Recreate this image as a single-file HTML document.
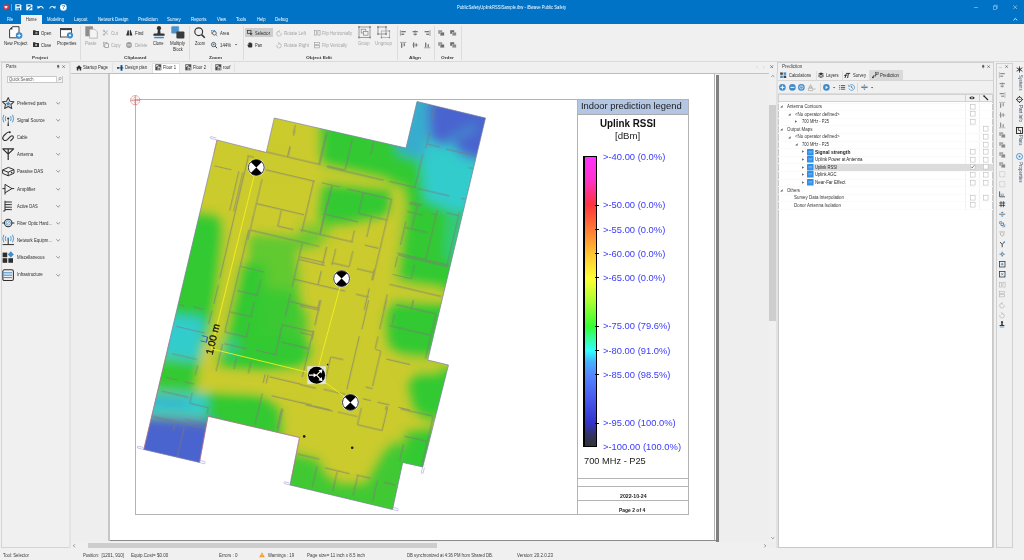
<!DOCTYPE html>
<html lang="en"><head><meta charset="utf-8"><title>PublicSafetyUplinkRSSISample.ibw - iBwave Public Safety</title>
<style>
html,body{margin:0;padding:0;}
body{width:1024px;height:560px;overflow:hidden;background:#f0f0f0;position:relative;font-family:"Liberation Sans",sans-serif;}
#app{position:absolute;left:0;top:0;width:1024px;height:560px;overflow:hidden;will-change:transform;}
.r{position:absolute;display:block;box-sizing:border-box;}
.t{position:absolute;white-space:nowrap;transform-origin:left center;display:block;}
svg{overflow:visible;}
svg text{font-family:"Liberation Sans",sans-serif;}
</style></head><body>
<div id="app">
<div class="r " style="left:0.00px;top:0.00px;width:1024.00px;height:23.70px;background:#0173c7;"></div>
<svg class="r" style="left:2.60px;top:4.00px;" width="6" height="6.4" viewBox="0 0 6 6.4"><path d="M0.6 0.4 H5.4 Q6 0.4 6 1 V4 Q6 5.4 3 6.4 Q0 5.4 0 4 V1 Q0 0.4 0.6 0.4Z" fill="#d9303e"/><path d="M1.6 2 H4.4 V3.6 L3 4.8 L1.6 3.6Z" fill="#fff" opacity="0.9"/></svg>
<div class="r " style="left:11.40px;top:4.00px;width:0.50px;height:6.50px;background:rgba(255,255,255,0.35);"></div>
<svg class="r" style="left:15.20px;top:3.90px;" width="6.6" height="6.6" viewBox="0 0 6.6 6.6"><path d="M0.3 0.3 H5.3 L6.3 1.3 V6.3 H0.3Z" fill="#fff"/><rect x="1.5" y="0.9" width="3.2" height="1.7" fill="#0173c7"/><rect x="1.6" y="3.9" width="3.4" height="2.4" fill="#0173c7"/><rect x="2.4" y="4.3" width="1" height="1.6" fill="#fff"/></svg>
<svg class="r" style="left:26.20px;top:3.90px;" width="6.6" height="6.6" viewBox="0 0 6.6 6.6"><path d="M0.3 0.3 H5.3 L6.3 1.3 V6.3 H0.3Z" fill="#fff"/><rect x="1.5" y="0.9" width="3.2" height="1.7" fill="#0173c7"/><path d="M2 5.6 L5 2.8 L5.8 3.6 L2.8 6.3 H2Z" fill="#0173c7"/></svg>
<svg class="r" style="left:37.30px;top:4.50px;" width="7" height="5" viewBox="0 0 7 5"><path d="M1.6 2.3 Q4.6 0.2 6.4 3.4" fill="none" stroke="#fff" stroke-width="1.1"/><path d="M0.2 0.8 L0.6 3.8 L3.2 2.8Z" fill="#fff"/></svg>
<svg class="r" style="left:48.60px;top:4.50px;" width="7" height="5" viewBox="0 0 7 5"><path d="M5.4 2.3 Q2.4 0.2 0.6 3.4" fill="none" stroke="#fff" stroke-width="1.1" opacity="0.85"/><path d="M6.8 0.8 L6.4 3.8 L3.8 2.8Z" fill="#fff" opacity="0.85"/></svg>
<svg class="r" style="left:59.70px;top:3.80px;" width="6.8" height="6.8" viewBox="0 0 6.8 6.8"><circle cx="3.4" cy="3.4" r="3.3" fill="#fff"/><text x="3.4" y="5.4" font-size="5.6" font-weight="bold" text-anchor="middle" fill="#0173c7">?</text></svg>
<span class="t " style="left:456.90px;top:4.82px;font-size:4.5px;line-height:5.40px;color:#ffffff;transform:scaleX(0.931);">PublicSafetyUplinkRSSISample.ibw - iBwave Public Safety</span>
<div class="r " style="left:974.20px;top:7.40px;width:4.20px;height:0.50px;background:rgba(255,255,255,0.4);"></div>
<svg class="r" style="left:993.20px;top:5.20px;" width="4.6" height="4.6" viewBox="0 0 4.6 4.6"><rect x="0.3" y="1.1" width="3.2" height="3.2" fill="none" stroke="rgba(255,255,255,0.7)" stroke-width="0.5"/><path d="M1.2 1.1 V0.3 H4.3 V3.4 H3.5" fill="none" stroke="rgba(255,255,255,0.7)" stroke-width="0.5"/></svg>
<svg class="r" style="left:1012.60px;top:5.10px;" width="4.4" height="4.4" viewBox="0 0 4.4 4.4"><path d="M0.3 0.3 L4.1 4.1 M4.1 0.3 L0.3 4.1" stroke="rgba(255,255,255,0.8)" stroke-width="0.55" fill="none"/></svg>
<svg class="r" style="left:1012.70px;top:18.20px;" width="4.6" height="2.6" viewBox="0 0 4.6 2.6"><path d="M0.4 2.3 L2.3 0.5 L4.2 2.3" stroke="#fff" stroke-width="0.8" fill="none"/></svg>
<div class="r " style="left:21.00px;top:15.00px;width:21.20px;height:9.00px;background:#f0f0f0;"></div>
<span class="t " style="left:7.00px;top:16.82px;font-size:4.5px;line-height:5.40px;color:#fff;transform:scaleX(0.855);">File</span>
<span class="t " style="left:26.00px;top:16.82px;font-size:4.5px;line-height:5.40px;color:#2b2b2b;transform:scaleX(0.883);">Home</span>
<span class="t " style="left:47.00px;top:16.82px;font-size:4.5px;line-height:5.40px;color:#fff;transform:scaleX(0.931);">Modeling</span>
<span class="t " style="left:74.00px;top:16.82px;font-size:4.5px;line-height:5.40px;color:#fff;">Layout</span>
<span class="t " style="left:97.50px;top:16.82px;font-size:4.5px;line-height:5.40px;color:#fff;transform:scaleX(0.960);">Network Design</span>
<span class="t " style="left:138.20px;top:16.82px;font-size:4.5px;line-height:5.40px;color:#fff;transform:scaleX(0.989);">Prediction</span>
<span class="t " style="left:167.20px;top:16.82px;font-size:4.5px;line-height:5.40px;color:#fff;transform:scaleX(0.985);">Survey</span>
<span class="t " style="left:191.20px;top:16.82px;font-size:4.5px;line-height:5.40px;color:#fff;transform:scaleX(0.977);">Reports</span>
<span class="t " style="left:217.00px;top:16.82px;font-size:4.5px;line-height:5.40px;color:#fff;transform:scaleX(0.951);">View</span>
<span class="t " style="left:236.40px;top:16.82px;font-size:4.5px;line-height:5.40px;color:#fff;transform:scaleX(0.971);">Tools</span>
<span class="t " style="left:256.60px;top:16.82px;font-size:4.5px;line-height:5.40px;color:#fff;transform:scaleX(0.908);">Help</span>
<span class="t " style="left:275.00px;top:16.82px;font-size:4.5px;line-height:5.40px;color:#fff;transform:scaleX(0.980);">Debug</span>
<div class="r " style="left:0.00px;top:23.70px;width:1024.00px;height:37.60px;background:#f0f0f0;"></div>
<div class="r " style="left:0.00px;top:61.10px;width:1024.00px;height:0.60px;background:#dadada;"></div>
<div class="r " style="left:80.30px;top:26.00px;width:0.50px;height:33.50px;background:#dcdcdc;"></div>
<div class="r " style="left:189.00px;top:26.00px;width:0.50px;height:33.50px;background:#dcdcdc;"></div>
<div class="r " style="left:242.50px;top:26.00px;width:0.50px;height:33.50px;background:#dcdcdc;"></div>
<div class="r " style="left:396.50px;top:26.00px;width:0.50px;height:33.50px;background:#dcdcdc;"></div>
<div class="r " style="left:434.40px;top:26.00px;width:0.50px;height:33.50px;background:#dcdcdc;"></div>
<div class="r " style="left:461.30px;top:26.00px;width:0.50px;height:33.50px;background:#dcdcdc;"></div>
<span class="t " style="left:32.00px;top:54.92px;font-size:4.4px;line-height:5.28px;color:#3a3a3a;font-weight:bold;transform:scaleX(1.073);">Project</span>
<span class="t " style="left:123.50px;top:54.92px;font-size:4.4px;line-height:5.28px;color:#3a3a3a;font-weight:bold;transform:scaleX(1.096);">Clipboard</span>
<span class="t " style="left:209.00px;top:54.92px;font-size:4.4px;line-height:5.28px;color:#3a3a3a;font-weight:bold;transform:scaleX(1.086);">Zoom</span>
<span class="t " style="left:306.00px;top:54.92px;font-size:4.4px;line-height:5.28px;color:#3a3a3a;font-weight:bold;transform:scaleX(1.119);">Object Edit</span>
<span class="t " style="left:409.00px;top:54.92px;font-size:4.4px;line-height:5.28px;color:#3a3a3a;font-weight:bold;transform:scaleX(1.091);">Align</span>
<span class="t " style="left:441.00px;top:54.92px;font-size:4.4px;line-height:5.28px;color:#3a3a3a;font-weight:bold;transform:scaleX(1.085);">Order</span>
<svg class="r" style="left:9.00px;top:25.60px;" width="14" height="13" viewBox="0 0 14 13"><path d="M3.4 0.7 H10 V11.8 H0.6 V3.5Z" fill="#fdfdfd" stroke="#3c3c3c" stroke-width="1" stroke-linejoin="round"/><path d="M0.6 3.5 H3.4 V0.7Z" fill="#3c3c3c"/><circle cx="10.1" cy="9.6" r="3.3" fill="#3f8ccb"/><path d="M10.1 7.4 L10.7 9 L12.3 9.6 L10.7 10.2 L10.1 11.8 L9.5 10.2 L7.9 9.6 L9.5 9Z" fill="#fff"/></svg>
<span class="t " style="left:4.00px;top:40.82px;font-size:4.5px;line-height:5.40px;color:#2b2b2b;transform:scaleX(0.969);">New Project</span>
<svg class="r" style="left:32.60px;top:30.40px;" width="6" height="5" viewBox="0 0 6 5"><path d="M0 0.3 H2.2 L2.8 1 H6 V5 H0Z" fill="#333"/><path d="M2 3 H4.2 M3.4 2.2 L4.3 3 L3.4 3.8" stroke="#fff" stroke-width="0.6" fill="none"/></svg>
<span class="t " style="left:41.00px;top:30.82px;font-size:4.5px;line-height:5.40px;color:#2b2b2b;transform:scaleX(0.954);">Open</span>
<svg class="r" style="left:32.60px;top:42.00px;" width="6" height="5" viewBox="0 0 6 5"><path d="M0 0.3 H2.2 L2.8 1 H6 V5 H0Z" fill="#333"/><path d="M2.2 2 L4 4 M4 2 L2.2 4" stroke="#fff" stroke-width="0.6" fill="none"/></svg>
<span class="t " style="left:41.00px;top:42.82px;font-size:4.5px;line-height:5.40px;color:#2b2b2b;transform:scaleX(0.887);">Close</span>
<svg class="r" style="left:59.50px;top:27.50px;" width="14" height="11" viewBox="0 0 14 11"><rect x="0.5" y="0.5" width="11" height="8.5" fill="#fdfdfd" stroke="#3c3c3c" stroke-width="0.9"/><rect x="0.5" y="0.5" width="11" height="1.6" fill="#3c3c3c"/><circle cx="10" cy="7.3" r="3.1" fill="#3f8ccb"/><circle cx="10" cy="7.3" r="1.1" fill="#fff"/></svg>
<span class="t " style="left:56.50px;top:40.82px;font-size:4.5px;line-height:5.40px;color:#2b2b2b;transform:scaleX(0.951);">Properties</span>
<svg class="r" style="left:85.00px;top:26.00px;" width="13" height="12.5" viewBox="0 0 13 12.5"><rect x="0.3" y="0.3" width="7.6" height="10" fill="#8d8d8d"/><path d="M4.6 3.2 H9.6 L12.3 5.9 V12.2 H4.6Z" fill="#f4f4f4" stroke="#a5a5a5" stroke-width="0.7"/></svg>
<span class="t " style="left:85.00px;top:40.82px;font-size:4.5px;line-height:5.40px;color:#a3a3a3;">Paste</span>
<svg class="r" style="left:103.00px;top:29.80px;" width="6" height="5.6" viewBox="0 0 6 5.6"><path d="M0.6 0.4 L5 4.6 M5 0.4 L0.6 4.6" stroke="#9a9a9a" stroke-width="0.7" fill="none"/><circle cx="1" cy="4.6" r="0.8" fill="none" stroke="#9a9a9a" stroke-width="0.5"/><circle cx="1" cy="0.9" r="0.8" fill="none" stroke="#9a9a9a" stroke-width="0.5"/></svg>
<span class="t " style="left:111.00px;top:30.82px;font-size:4.5px;line-height:5.40px;color:#a3a3a3;">Cut</span>
<svg class="r" style="left:103.00px;top:41.60px;" width="6" height="6" viewBox="0 0 6 6"><rect x="0.4" y="0.4" width="3.6" height="3.8" fill="none" stroke="#a0a0a0" stroke-width="0.6"/><rect x="1.8" y="1.8" width="3.8" height="3.8" fill="#f6f6f6" stroke="#8a8a8a" stroke-width="0.7"/></svg>
<span class="t " style="left:111.00px;top:42.82px;font-size:4.5px;line-height:5.40px;color:#a3a3a3;transform:scaleX(0.904);">Copy</span>
<svg class="r" style="left:126.20px;top:29.80px;" width="6.6" height="5.6" viewBox="0 0 6.6 5.6"><path d="M0.2 5.4 L1.6 1 H2.8 L3 5.4Z M6.4 5.4 L5 1 H3.8 L3.6 5.4Z" fill="#2e2e2e"/><rect x="1.6" y="0.2" width="1.1" height="1.2" fill="#2e2e2e"/><rect x="3.9" y="0.2" width="1.1" height="1.2" fill="#2e2e2e"/></svg>
<span class="t " style="left:134.50px;top:30.82px;font-size:4.5px;line-height:5.40px;color:#2b2b2b;transform:scaleX(0.971);">Find</span>
<svg class="r" style="left:126.40px;top:41.70px;" width="6" height="6" viewBox="0 0 6 6"><circle cx="3" cy="3" r="2.9" fill="#9d9d9d"/><rect x="1.2" y="2.5" width="3.6" height="1" fill="#e8e8e8"/></svg>
<span class="t " style="left:134.50px;top:42.82px;font-size:4.5px;line-height:5.40px;color:#a3a3a3;transform:scaleX(0.961);">Delete</span>
<svg class="r" style="left:153.00px;top:26.00px;" width="12" height="12.5" viewBox="0 0 12 12.5"><circle cx="6" cy="2.2" r="2.1" fill="#333"/><path d="M4.9 3.5 H7.1 L7.6 7.6 H10.6 Q11.6 7.6 11.6 8.6 V9.8 H0.4 V8.6 Q0.4 7.6 1.4 7.6 H4.4Z" fill="#333"/><rect x="1.2" y="10.8" width="9.6" height="1.5" fill="#3f8ccb"/></svg>
<span class="t " style="left:153.00px;top:40.82px;font-size:4.5px;line-height:5.40px;color:#2b2b2b;transform:scaleX(0.893);">Clone</span>
<svg class="r" style="left:171.00px;top:26.00px;" width="14" height="13" viewBox="0 0 14 13"><rect x="0.3" y="0.3" width="7.6" height="7.2" rx="1" fill="#4a92cc"/><path d="M0.3 1.5 L1.5 0.3 H7.9 V6.3" fill="none" stroke="#7fb4de" stroke-width="0.5"/><rect x="5.4" y="5.4" width="8" height="7.2" rx="1" fill="#3a3a3a"/></svg>
<span class="t " style="left:170.00px;top:40.82px;font-size:4.5px;line-height:5.40px;color:#2b2b2b;transform:scaleX(0.983);">Multiply</span>
<span class="t " style="left:172.50px;top:46.82px;font-size:4.5px;line-height:5.40px;color:#2b2b2b;transform:scaleX(0.872);">Block</span>
<svg class="r" style="left:194.00px;top:27.00px;" width="11.5" height="11.5" viewBox="0 0 11.5 11.5"><circle cx="4.7" cy="4.7" r="3.9" fill="none" stroke="#333" stroke-width="1.15"/><path d="M7.6 7.6 L10.8 10.8" stroke="#333" stroke-width="1.5"/></svg>
<span class="t " style="left:194.50px;top:40.82px;font-size:4.5px;line-height:5.40px;color:#2b2b2b;transform:scaleX(0.869);">Zoom</span>
<svg class="r" style="left:211.20px;top:29.60px;" width="6.6" height="6.2" viewBox="0 0 6.6 6.2"><rect x="0.4" y="0.4" width="3.4" height="3" fill="none" stroke="#3f8ccb" stroke-width="0.6"/><circle cx="3.4" cy="3.2" r="1.9" fill="#f0f0f0" stroke="#333" stroke-width="0.7"/><path d="M4.8 4.6 L6.3 6" stroke="#3f8ccb" stroke-width="0.9"/></svg>
<span class="t " style="left:219.50px;top:30.82px;font-size:4.5px;line-height:5.40px;color:#2b2b2b;transform:scaleX(0.947);">Area</span>
<svg class="r" style="left:211.20px;top:41.60px;" width="6.6" height="6.4" viewBox="0 0 6.6 6.4"><circle cx="2.6" cy="2.6" r="2.2" fill="none" stroke="#333" stroke-width="0.7"/><circle cx="2.6" cy="2.6" r="1" fill="#3f8ccb"/><path d="M4.2 4.2 L6.2 6.2" stroke="#333" stroke-width="0.9"/></svg>
<span class="t " style="left:220.00px;top:42.82px;font-size:4.5px;line-height:5.40px;color:#2b2b2b;transform:scaleX(0.956);">144%</span>
<svg class="r" style="left:235.00px;top:44.20px;" width="2.2" height="1.4" viewBox="0 0 2.2 1.4"><path d="M0 0 H2.2 L1.1 1.3Z" fill="#444"/></svg>
<div class="r " style="left:244.50px;top:28.40px;width:28.60px;height:8.60px;background:#cdcdcd;"></div>
<svg class="r" style="left:246.60px;top:30.00px;" width="6.4" height="5.6" viewBox="0 0 6.4 5.6"><rect x="0.4" y="0.4" width="3.6" height="3" fill="none" stroke="#333" stroke-width="0.7"/><path d="M2.8 2.2 L6 3.8 L4.6 4.2 L5.6 5.4 L4.9 5.6 L4 4.5 L3.1 5.4Z" fill="#333" stroke="#cdcdcd" stroke-width="0.2"/></svg>
<span class="t " style="left:255.00px;top:30.82px;font-size:4.5px;line-height:5.40px;color:#2b2b2b;transform:scaleX(0.909);">Selector</span>
<svg class="r" style="left:246.80px;top:42.00px;" width="6.4" height="5.8" viewBox="0 0 6.4 5.8"><path d="M1.6 5.6 Q0.2 3.6 0.4 2.6 L1.4 3 V0.9 Q1.9 0.4 2.3 0.9 V0.5 Q2.9 0 3.3 0.5 V0.7 Q3.9 0.3 4.3 0.8 V1.3 Q4.9 1 5.3 1.5 V4 Q5.3 5 4.6 5.6Z" fill="#333"/></svg>
<span class="t " style="left:255.00px;top:42.82px;font-size:4.5px;line-height:5.40px;color:#2b2b2b;transform:scaleX(0.899);">Pan</span>
<svg class="r" style="left:276.00px;top:30.00px;" width="6" height="6" viewBox="0 0 6 6"><g transform="translate(6,0) scale(-1,1)"><path d="M3 1.4 A2.3 2.3 0 1 1 0.9 2.9" fill="none" stroke="#a2a2a2" stroke-width="0.6"/><path d="M2 0.2 L3.4 1.4 L2 2.6" fill="none" stroke="#a2a2a2" stroke-width="0.6"/></g></svg>
<span class="t " style="left:284.00px;top:30.82px;font-size:4.5px;line-height:5.40px;color:#a3a3a3;">Rotate Left</span>
<svg class="r" style="left:276.00px;top:41.80px;" width="6" height="6" viewBox="0 0 6 6"><g><path d="M3 1.4 A2.3 2.3 0 1 1 0.9 2.9" fill="none" stroke="#a2a2a2" stroke-width="0.6"/><path d="M2 0.2 L3.4 1.4 L2 2.6" fill="none" stroke="#a2a2a2" stroke-width="0.6"/></g></svg>
<span class="t " style="left:284.00px;top:42.82px;font-size:4.5px;line-height:5.40px;color:#a3a3a3;">Rotate Right</span>
<svg class="r" style="left:314.00px;top:30.20px;" width="6.4" height="5.4" viewBox="0 0 6.4 5.4"><rect x="0.3" y="0.3" width="2.2" height="4.8" fill="none" stroke="#9a9a9a" stroke-width="0.6"/><rect x="3.9" y="0.3" width="2.2" height="4.8" fill="none" stroke="#9a9a9a" stroke-width="0.6"/></svg>
<span class="t " style="left:322.00px;top:30.82px;font-size:4.5px;line-height:5.40px;color:#a3a3a3;transform:scaleX(0.937);">Flip Horizontally</span>
<svg class="r" style="left:314.20px;top:41.60px;" width="6" height="6.2" viewBox="0 0 6 6.2"><rect x="0.3" y="0.3" width="5.2" height="2.2" fill="none" stroke="#9a9a9a" stroke-width="0.6"/><rect x="0.3" y="3.7" width="5.2" height="2.2" fill="none" stroke="#9a9a9a" stroke-width="0.6"/></svg>
<span class="t " style="left:322.00px;top:42.82px;font-size:4.5px;line-height:5.40px;color:#a3a3a3;transform:scaleX(0.943);">Flip Vertically</span>
<svg class="r" style="left:357.50px;top:26.00px;" width="13" height="12.6" viewBox="0 0 13 12.6"><rect x="1" y="1" width="11" height="10.6" fill="none" stroke="#858585" stroke-width="0.8"/><rect x="3.2" y="3.2" width="4.6" height="3.8" fill="none" stroke="#858585" stroke-width="0.7"/><rect x="5.4" y="5.4" width="4.6" height="3.8" fill="#f0f0f0" stroke="#858585" stroke-width="0.7"/><g fill="#8a8a8a"><circle cx="1" cy="1" r="1"/><circle cx="12" cy="1" r="1"/><circle cx="1" cy="11.6" r="1"/><circle cx="12" cy="11.6" r="1"/></g></svg>
<span class="t " style="left:358.00px;top:40.82px;font-size:4.5px;line-height:5.40px;color:#a3a3a3;transform:scaleX(0.919);">Group</span>
<svg class="r" style="left:377.00px;top:26.00px;" width="13.4" height="12.6" viewBox="0 0 13.4 12.6"><rect x="1" y="1" width="8" height="7" fill="none" stroke="#858585" stroke-width="0.8"/><rect x="4.4" y="5" width="8" height="6.6" fill="none" stroke="#a0a0a0" stroke-width="0.7"/><g fill="#8a8a8a"><circle cx="1" cy="1" r="1"/><circle cx="9" cy="1" r="1"/><circle cx="1" cy="8" r="1"/><circle cx="9" cy="8" r="1"/><circle cx="12.4" cy="5" r="0.8"/><circle cx="12.4" cy="11.6" r="0.8"/><circle cx="4.4" cy="11.6" r="0.8"/></g></svg>
<span class="t " style="left:375.00px;top:40.82px;font-size:4.5px;line-height:5.40px;color:#a3a3a3;transform:scaleX(0.985);">Ungroup</span>
<svg class="r" style="left:400.30px;top:29.60px;" width="6.4" height="6" viewBox="0 0 6.4 6"><path d="M0.4 0 V6" stroke="#777" stroke-width="0.6"/><rect x="1.2" y="1" width="4.6" height="1.3" fill="#777"/><rect x="1.2" y="3.6" width="3" height="1.3" fill="#777"/></svg>
<svg class="r" style="left:400.30px;top:41.60px;" width="6.4" height="6" viewBox="0 0 6.4 6"><path d="M0 0.4 H6.4" stroke="#777" stroke-width="0.6"/><rect x="1" y="1.2" width="1.3" height="4.6" fill="#777"/><rect x="3.6" y="1.2" width="1.3" height="3" fill="#777"/></svg>
<svg class="r" style="left:412.00px;top:29.60px;" width="6.4" height="6" viewBox="0 0 6.4 6"><path d="M3.2 0 V6" stroke="#777" stroke-width="0.5"/><rect x="0.6" y="1" width="5.2" height="1.3" fill="#777"/><rect x="1.6" y="3.6" width="3.2" height="1.3" fill="#777"/></svg>
<svg class="r" style="left:412.00px;top:41.60px;" width="6.4" height="6" viewBox="0 0 6.4 6"><path d="M0 3 H6.4" stroke="#777" stroke-width="0.5"/><rect x="1" y="0.4" width="1.3" height="5.2" fill="#777"/><rect x="3.6" y="1.4" width="1.3" height="3.2" fill="#777"/></svg>
<svg class="r" style="left:423.70px;top:29.60px;" width="6.4" height="6" viewBox="0 0 6.4 6"><path d="M6 0 V6" stroke="#777" stroke-width="0.6"/><rect x="0.6" y="1" width="4.6" height="1.3" fill="#777"/><rect x="2.2" y="3.6" width="3" height="1.3" fill="#777"/></svg>
<svg class="r" style="left:423.70px;top:41.60px;" width="6.4" height="6" viewBox="0 0 6.4 6"><path d="M0 5.8 H6.4" stroke="#777" stroke-width="0.6"/><rect x="1" y="0.6" width="1.3" height="4.6" fill="#777"/><rect x="3.6" y="2.2" width="1.3" height="3" fill="#777"/></svg>
<svg class="r" style="left:438.40px;top:29.80px;" width="6.4" height="6" viewBox="0 0 6.4 6"><rect x="0.2" y="0.2" width="4" height="3.6" fill="#9a9a9a"/><rect x="2.2" y="2.2" width="4" height="3.6" fill="#6e6e6e" stroke="#f0f0f0" stroke-width="0.3"/></svg>
<svg class="r" style="left:450.00px;top:29.80px;" width="6.4" height="6" viewBox="0 0 6.4 6"><rect x="0.2" y="0.2" width="4" height="3.6" fill="#6e6e6e"/><rect x="2.2" y="2.2" width="4" height="3.6" fill="#8a8a8a" stroke="#f0f0f0" stroke-width="0.3"/></svg>
<svg class="r" style="left:438.40px;top:41.70px;" width="6.4" height="6" viewBox="0 0 6.4 6"><rect x="0.2" y="0.2" width="4" height="3.6" fill="#9a9a9a"/><rect x="2.2" y="2.2" width="4" height="3.6" fill="#6e6e6e" stroke="#f0f0f0" stroke-width="0.3"/></svg>
<svg class="r" style="left:450.00px;top:41.70px;" width="6.4" height="6" viewBox="0 0 6.4 6"><rect x="0.2" y="0.2" width="4" height="3.6" fill="#6e6e6e"/><rect x="2.2" y="2.2" width="4" height="3.6" fill="#8a8a8a" stroke="#f0f0f0" stroke-width="0.3"/></svg>
<div class="r " style="left:1.30px;top:62.20px;width:68.40px;height:486.00px;background:#f0f0f0;border:0.6px solid #d4d4d4;"></div>
<span class="t " style="left:6.00px;top:63.73px;font-size:4.6px;line-height:5.52px;color:#444;transform:scaleX(0.978);">Parts</span>
<svg class="r" style="left:57.40px;top:64.60px;" width="2.4" height="3.4" viewBox="0 0 2.4 3.4"><path d="M0.5 0.3 H1.9 V2 H0.5Z M0 2 H2.4 M1.2 2 V3.4" stroke="#555" stroke-width="0.5" fill="#555"/></svg>
<svg class="r" style="left:62.40px;top:64.80px;" width="3.2" height="3.2" viewBox="0 0 3.2 3.2"><path d="M0.3 0.3 L2.9 2.9 M2.9 0.3 L0.3 2.9" stroke="#444" stroke-width="0.55"/></svg>
<div class="r " style="left:7.40px;top:75.60px;width:55.40px;height:7.20px;background:#ffffff;border:0.6px solid #c8c8c8;"></div>
<div class="r " style="left:56.40px;top:75.90px;width:6.10px;height:6.60px;background:#f2f2f2;border-left:0.5px solid #d0d0d0;"></div>
<span class="t " style="left:9.00px;top:76.82px;font-size:4.5px;line-height:5.40px;color:#555;transform:scaleX(0.911);">Quick Search</span>
<svg class="r" style="left:58.00px;top:77.40px;" width="3.6" height="3.8" viewBox="0 0 3.6 3.8"><circle cx="2.2" cy="1.4" r="1.1" fill="none" stroke="#777" stroke-width="0.5"/><path d="M1.4 2.2 L0.3 3.5" stroke="#777" stroke-width="0.6"/></svg>
<svg class="r" style="left:2.40px;top:96.80px;" width="12.6" height="12.4" viewBox="0 0 12.6 12.4"><g stroke-linejoin="round"><path d="M6.2 0.6 L7.9 4.3 L11.9 4.8 L8.9 7.5 L9.8 11.5 L6.2 9.5 L2.6 11.5 L3.5 7.5 L0.5 4.8 L4.5 4.3Z" fill="none" stroke="#3a3a3a" stroke-width="1.05"/><path d="M6.2 4 L7 5.8 L8.9 6 L7.5 7.2 L7.9 9 L6.2 8.1 L4.5 9 L4.9 7.2 L3.5 6 L5.4 5.8Z" fill="#3f8ccb"/></g></svg>
<span class="t " style="left:16.80px;top:100.82px;font-size:4.5px;line-height:5.40px;color:#2b2b2b;transform:scaleX(0.983);">Preferred parts</span>
<svg class="r" style="left:56.00px;top:101.80px;" width="4.4" height="2.6" viewBox="0 0 4.4 2.6"><path d="M0.3 0.3 L2.2 2.1 L4.1 0.3" fill="none" stroke="#555" stroke-width="0.6"/></svg>
<svg class="r" style="left:2.40px;top:113.97px;" width="12.6" height="12.4" viewBox="0 0 12.6 12.4"><g stroke-linejoin="round"><path d="M6.2 5 L5.4 12 H7Z" fill="#2e2e2e"/><circle cx="6.2" cy="4.6" r="1.1" fill="#2e2e2e"/><path d="M3.8 2.2 Q2.6 4.6 3.8 7 M8.6 2.2 Q9.8 4.6 8.6 7" fill="none" stroke="#3f8ccb" stroke-width="0.9"/><path d="M1.8 0.8 Q-0.2 4.6 1.8 8.4 M10.6 0.8 Q12.6 4.6 10.6 8.4" fill="none" stroke="#3f8ccb" stroke-width="0.9"/></g></svg>
<span class="t " style="left:16.80px;top:117.82px;font-size:4.5px;line-height:5.40px;color:#2b2b2b;transform:scaleX(0.985);">Signal Source</span>
<svg class="r" style="left:56.00px;top:118.97px;" width="4.4" height="2.6" viewBox="0 0 4.4 2.6"><path d="M0.3 0.3 L2.2 2.1 L4.1 0.3" fill="none" stroke="#555" stroke-width="0.6"/></svg>
<svg class="r" style="left:2.40px;top:131.14px;" width="12.6" height="12.4" viewBox="0 0 12.6 12.4"><g stroke-linejoin="round"><path d="M7.4 1 Q5.8 0.8 4 2.6 L1.6 5 Q-0.2 7 1.6 8.8 Q3.4 10.4 5.4 8.6 L8.6 5.4 Q10 4.2 11 5.2 Q12 6.4 10.8 7.6 L8.4 10" fill="none" stroke="#2e2e2e" stroke-width="1.1"/><circle cx="7.8" cy="1.2" r="1" fill="#2e2e2e"/></g></svg>
<span class="t " style="left:16.80px;top:134.82px;font-size:4.5px;line-height:5.40px;color:#2b2b2b;transform:scaleX(0.902);">Cable</span>
<svg class="r" style="left:56.00px;top:136.14px;" width="4.4" height="2.6" viewBox="0 0 4.4 2.6"><path d="M0.3 0.3 L2.2 2.1 L4.1 0.3" fill="none" stroke="#555" stroke-width="0.6"/></svg>
<svg class="r" style="left:2.40px;top:148.31px;" width="12.6" height="12.4" viewBox="0 0 12.6 12.4"><g stroke-linejoin="round"><path d="M0.8 0.8 H11.6 L6.2 6.2Z M6.2 0.8 V12" fill="none" stroke="#2e2e2e" stroke-width="1.2"/></g></svg>
<span class="t " style="left:16.80px;top:151.82px;font-size:4.5px;line-height:5.40px;color:#2b2b2b;transform:scaleX(0.966);">Antenna</span>
<svg class="r" style="left:56.00px;top:153.31px;" width="4.4" height="2.6" viewBox="0 0 4.4 2.6"><path d="M0.3 0.3 L2.2 2.1 L4.1 0.3" fill="none" stroke="#555" stroke-width="0.6"/></svg>
<svg class="r" style="left:2.40px;top:165.48px;" width="12.6" height="12.4" viewBox="0 0 12.6 12.4"><g stroke-linejoin="round"><path d="M0.6 5 L6.4 2.4 L12 4.6 V8.2 L6.2 10.8 L0.6 8.4Z M0.6 5 L6.2 7.2 L12 4.6 M6.2 7.2 V10.8" fill="none" stroke="#2e2e2e" stroke-width="1"/><circle cx="9.6" cy="7.6" r="0.8" fill="#2e2e2e"/></g></svg>
<span class="t " style="left:16.80px;top:168.82px;font-size:4.5px;line-height:5.40px;color:#2b2b2b;transform:scaleX(1.005);">Passive DAS</span>
<svg class="r" style="left:56.00px;top:170.48px;" width="4.4" height="2.6" viewBox="0 0 4.4 2.6"><path d="M0.3 0.3 L2.2 2.1 L4.1 0.3" fill="none" stroke="#555" stroke-width="0.6"/></svg>
<svg class="r" style="left:2.40px;top:182.65px;" width="12.6" height="12.4" viewBox="0 0 12.6 12.4"><g stroke-linejoin="round"><path d="M3 1.4 L10 5.6 L3 9.8Z M0.4 5.6 H3 M10 5.6 H12.2 M3 9.8 V11.6" fill="none" stroke="#2e2e2e" stroke-width="1"/></g></svg>
<span class="t " style="left:16.80px;top:186.82px;font-size:4.5px;line-height:5.40px;color:#2b2b2b;transform:scaleX(1.051);">Amplifier</span>
<svg class="r" style="left:56.00px;top:187.65px;" width="4.4" height="2.6" viewBox="0 0 4.4 2.6"><path d="M0.3 0.3 L2.2 2.1 L4.1 0.3" fill="none" stroke="#555" stroke-width="0.6"/></svg>
<svg class="r" style="left:2.40px;top:199.82px;" width="12.6" height="12.4" viewBox="0 0 12.6 12.4"><g stroke-linejoin="round"><path d="M3 0.8 V11 H1.2 M3 2 H8 M3 4.6 H8 M3 7.2 H8 M3 9.6 H8" fill="none" stroke="#2e2e2e" stroke-width="1"/><g fill="#2e2e2e"><circle cx="9" cy="2" r="0.8"/><circle cx="9" cy="4.6" r="0.8"/><circle cx="9" cy="7.2" r="0.8"/><circle cx="9" cy="9.6" r="0.8"/></g></g></svg>
<span class="t " style="left:16.80px;top:203.82px;font-size:4.5px;line-height:5.40px;color:#2b2b2b;transform:scaleX(0.905);">Active DAS</span>
<svg class="r" style="left:56.00px;top:204.82px;" width="4.4" height="2.6" viewBox="0 0 4.4 2.6"><path d="M0.3 0.3 L2.2 2.1 L4.1 0.3" fill="none" stroke="#555" stroke-width="0.6"/></svg>
<svg class="r" style="left:2.40px;top:216.99px;" width="12.6" height="12.4" viewBox="0 0 12.6 12.4"><g stroke-linejoin="round"><path d="M0.2 6 H2.6 M9.8 6 H12.4" stroke="#2e2e2e" stroke-width="1.05"/><circle cx="6.2" cy="6" r="3.7" fill="none" stroke="#2e2e2e" stroke-width="1.05"/><circle cx="6.2" cy="6" r="2.2" fill="none" stroke="#3f8ccb" stroke-width="0.7"/><path d="M5 7.2 L7.4 4.8" stroke="#3f8ccb" stroke-width="0.6"/></g></svg>
<span class="t " style="left:16.80px;top:220.82px;font-size:4.5px;line-height:5.40px;color:#2b2b2b;transform:scaleX(0.952);">Fiber Optic Hard...</span>
<svg class="r" style="left:56.00px;top:221.99px;" width="4.4" height="2.6" viewBox="0 0 4.4 2.6"><path d="M0.3 0.3 L2.2 2.1 L4.1 0.3" fill="none" stroke="#555" stroke-width="0.6"/></svg>
<svg class="r" style="left:2.40px;top:234.16px;" width="12.6" height="12.4" viewBox="0 0 12.6 12.4"><g stroke-linejoin="round"><path d="M6.2 5 V10 M0.6 10.6 H12" fill="none" stroke="#2e2e2e" stroke-width="1"/><circle cx="6.2" cy="4.6" r="1" fill="#3f8ccb"/><path d="M3.8 2.2 Q2.6 4.6 3.8 7 M8.6 2.2 Q9.8 4.6 8.6 7" fill="none" stroke="#3f8ccb" stroke-width="0.9"/><path d="M1.8 0.8 Q-0.2 4.6 1.8 8.4 M10.6 0.8 Q12.6 4.6 10.6 8.4" fill="none" stroke="#3f8ccb" stroke-width="0.9"/></g></svg>
<span class="t " style="left:16.80px;top:237.82px;font-size:4.5px;line-height:5.40px;color:#2b2b2b;transform:scaleX(0.952);">Network Equipm...</span>
<svg class="r" style="left:56.00px;top:239.16px;" width="4.4" height="2.6" viewBox="0 0 4.4 2.6"><path d="M0.3 0.3 L2.2 2.1 L4.1 0.3" fill="none" stroke="#555" stroke-width="0.6"/></svg>
<svg class="r" style="left:2.40px;top:251.33px;" width="12.6" height="12.4" viewBox="0 0 12.6 12.4"><g stroke-linejoin="round"><rect x="0.6" y="1.6" width="4.6" height="4.6" fill="#2e2e2e"/><rect x="0.6" y="7.2" width="4.6" height="4.6" fill="#2e2e2e"/><rect x="6.4" y="7.2" width="4.6" height="4.6" fill="#2e2e2e"/><path d="M8.8 0.2 L11.8 3.4 L8.8 6.6 L5.8 3.4Z" fill="#3f8ccb"/></g></svg>
<span class="t " style="left:16.80px;top:254.82px;font-size:4.5px;line-height:5.40px;color:#2b2b2b;transform:scaleX(0.968);">Miscellaneous</span>
<svg class="r" style="left:56.00px;top:256.33px;" width="4.4" height="2.6" viewBox="0 0 4.4 2.6"><path d="M0.3 0.3 L2.2 2.1 L4.1 0.3" fill="none" stroke="#555" stroke-width="0.6"/></svg>
<svg class="r" style="left:2.40px;top:268.50px;" width="12.6" height="12.4" viewBox="0 0 12.6 12.4"><g stroke-linejoin="round"><rect x="0.8" y="0.8" width="10.6" height="10.8" rx="1.6" fill="none" stroke="#2e2e2e" stroke-width="1.05"/><path d="M0.4 3.8 H10 M0.4 6.2 H10 M0.4 8.6 H10" stroke="#3f8ccb" stroke-width="1"/></g></svg>
<span class="t " style="left:16.80px;top:271.82px;font-size:4.5px;line-height:5.40px;color:#2b2b2b;transform:scaleX(0.973);">Infrastructure</span>
<svg class="r" style="left:56.00px;top:273.50px;" width="4.4" height="2.6" viewBox="0 0 4.4 2.6"><path d="M0.3 0.3 L2.2 2.1 L4.1 0.3" fill="none" stroke="#555" stroke-width="0.6"/></svg>
<div class="r " style="left:151.90px;top:62.80px;width:28.40px;height:10.00px;background:#ffffff;border:0.4px solid #e0e0e0;border-bottom:none;"></div>
<div class="r " style="left:112.00px;top:63.00px;width:0.40px;height:9.40px;background:#e2e2e2;"></div>
<div class="r " style="left:210.50px;top:63.00px;width:0.40px;height:9.40px;background:#e2e2e2;"></div>
<div class="r " style="left:234.40px;top:63.00px;width:0.40px;height:9.40px;background:#e2e2e2;"></div>
<svg class="r" style="left:75.60px;top:64.80px;" width="6" height="5.6" viewBox="0 0 6 5.6"><path d="M3 0.2 L6 3 H5.2 V5.6 H3.7 V3.8 H2.3 V5.6 H0.8 V3 H0Z" fill="#2e2e2e"/></svg>
<span class="t " style="left:83.00px;top:64.82px;font-size:4.5px;line-height:5.40px;color:#2b2b2b;transform:scaleX(0.952);">Startup Page</span>
<svg class="r" style="left:117.00px;top:64.80px;" width="6.4" height="5.8" viewBox="0 0 6.4 5.8"><rect x="3.4" y="0" width="2.2" height="5.8" fill="#3f8ccb"/><path d="M0 2.9 H6.4 M4.5 0.4 V5.4" stroke="#2e2e2e" stroke-width="0.8"/><circle cx="1" cy="2.9" r="0.9" fill="#2e2e2e"/></svg>
<span class="t " style="left:125.00px;top:64.82px;font-size:4.5px;line-height:5.40px;color:#2b2b2b;transform:scaleX(0.926);">Design plan</span>
<svg class="r" style="left:155.20px;top:64.40px;" width="6.6" height="6.6" viewBox="0 0 6.6 6.6"><rect x="0.3" y="0.3" width="6" height="6" fill="#4a4a4a"/><path d="M1.3 1.5 H3.1 V3.3 H5.2 V6.2 M3.1 3.3 V6.2 M1.3 1.5 V3" fill="none" stroke="#fff" stroke-width="0.75"/></svg>
<span class="t " style="left:163.00px;top:64.82px;font-size:4.5px;line-height:5.40px;color:#2b2b2b;transform:scaleX(0.928);">Floor 1</span>
<svg class="r" style="left:185.20px;top:64.40px;" width="6.6" height="6.6" viewBox="0 0 6.6 6.6"><rect x="0.3" y="0.3" width="6" height="6" fill="#4a4a4a"/><path d="M1.3 1.5 H3.1 V3.3 H5.2 V6.2 M3.1 3.3 V6.2 M1.3 1.5 V3" fill="none" stroke="#fff" stroke-width="0.75"/></svg>
<span class="t " style="left:193.00px;top:64.82px;font-size:4.5px;line-height:5.40px;color:#2b2b2b;transform:scaleX(0.928);">Floor 2</span>
<svg class="r" style="left:214.80px;top:64.40px;" width="6.6" height="6.6" viewBox="0 0 6.6 6.6"><rect x="0.3" y="0.3" width="6" height="6" fill="#4a4a4a"/><path d="M1.3 1.5 H3.1 V3.3 H5.2 V6.2 M3.1 3.3 V6.2 M1.3 1.5 V3" fill="none" stroke="#fff" stroke-width="0.75"/></svg>
<span class="t " style="left:223.00px;top:64.82px;font-size:4.5px;line-height:5.40px;color:#2b2b2b;transform:scaleX(0.967);">roof</span>
<svg class="r" style="left:755.60px;top:65.90px;" width="1.6" height="2.4" viewBox="0 0 1.6 2.4"><path d="M1.4 0.2 L0.3 1.2 L1.4 2.2" fill="none" stroke="#bdbdbd" stroke-width="0.5"/></svg>
<svg class="r" style="left:763.40px;top:65.90px;" width="1.6" height="2.4" viewBox="0 0 1.6 2.4"><path d="M0.2 0.2 L1.3 1.2 L0.2 2.2" fill="none" stroke="#bdbdbd" stroke-width="0.5"/></svg>
<svg class="r" style="left:770.20px;top:65.40px;" width="3.4" height="3.4" viewBox="0 0 3.4 3.4"><path d="M0.3 0.3 L3.1 3.1 M3.1 0.3 L0.3 3.1" stroke="#444" stroke-width="0.6"/></svg>
<div class="r " style="left:0.00px;top:548.60px;width:1024.00px;height:11.40px;background:#f0f0f0;"></div>
<span class="t " style="left:3.00px;top:552.82px;font-size:4.5px;line-height:5.40px;color:#3a3a3a;transform:scaleX(0.954);">Tool: Selector</span>
<span class="t " style="left:82.50px;top:552.82px;font-size:4.5px;line-height:5.40px;color:#3a3a3a;transform:scaleX(0.927);">Position:</span>
<span class="t " style="left:101.50px;top:552.82px;font-size:4.5px;line-height:5.40px;color:#3a3a3a;">[1201, 910]</span>
<span class="t " style="left:131.00px;top:552.82px;font-size:4.5px;line-height:5.40px;color:#3a3a3a;">Equip.Cost= $0.00</span>
<span class="t " style="left:219.00px;top:552.82px;font-size:4.5px;line-height:5.40px;color:#3a3a3a;">Errors : 0</span>
<svg class="r" style="left:258.60px;top:552.20px;" width="6" height="5.4" viewBox="0 0 6 5.4"><path d="M3 0.3 L5.8 5.2 H0.2Z" fill="#f39a1e"/><path d="M3 2 V3.6 M3 4.2 V4.7" stroke="#fff" stroke-width="0.6"/></svg>
<span class="t " style="left:268.00px;top:552.82px;font-size:4.5px;line-height:5.40px;color:#3a3a3a;transform:scaleX(0.942);">Warnings : 19</span>
<span class="t " style="left:307.00px;top:552.82px;font-size:4.5px;line-height:5.40px;color:#3a3a3a;transform:scaleX(0.994);">Page size= 11 inch x 8.5 inch</span>
<span class="t " style="left:407.00px;top:552.82px;font-size:4.5px;line-height:5.40px;color:#3a3a3a;transform:scaleX(0.937);">DB synchronized at 4:36 PM from Shared DB.</span>
<span class="t " style="left:517.00px;top:552.82px;font-size:4.5px;line-height:5.40px;color:#3a3a3a;transform:scaleX(0.992);">Version: 20.2.0.23</span>
<div class="r " style="left:71.40px;top:73.10px;width:705.00px;height:475.40px;background:#eeeeee;"></div>
<div class="r " style="left:69.40px;top:62.20px;width:2.00px;height:486.00px;background:#e3e3e3;"></div>
<div class="r " style="left:71.00px;top:72.70px;width:706.00px;height:0.70px;background:#c4c4c4;"></div>
<div class="r " style="left:716.10px;top:74.80px;width:2.70px;height:467.40px;background:#808080;"></div>
<div class="r " style="left:109.40px;top:73.30px;width:606.40px;height:468.10px;background:#8c8c8c;"></div>
<div class="r " style="left:109.80px;top:73.50px;width:606.00px;height:466.40px;background:#ffffff;"></div>
<div class="r " style="left:108.20px;top:73.30px;width:1.60px;height:468.00px;background:#c6c6c6;"></div>
<div class="r " style="left:108.20px;top:73.00px;width:607.40px;height:0.60px;background:#bdbdbd;"></div>
<div class="r " style="left:714.30px;top:73.60px;width:0.70px;height:466.40px;background:#b4b4b4;"></div>
<div class="r " style="left:768.60px;top:73.40px;width:7.40px;height:468.40px;background:#f0f0f0;"></div>
<div class="r " style="left:769.20px;top:105.00px;width:6.40px;height:216.00px;background:#cdcdcd;"></div>
<svg class="r" style="left:770.60px;top:75.20px;" width="3.6" height="2.2" viewBox="0 0 3.6 2.2"><path d="M0.3 1.9 L1.8 0.4 L3.3 1.9" fill="none" stroke="#555" stroke-width="0.6"/></svg>
<svg class="r" style="left:770.60px;top:537.40px;" width="3.6" height="2.2" viewBox="0 0 3.6 2.2"><path d="M0.3 0.3 L1.8 1.8 L3.3 0.3" fill="none" stroke="#555" stroke-width="0.6"/></svg>
<div class="r " style="left:71.40px;top:542.40px;width:697.00px;height:6.30px;background:#f0f0f0;"></div>
<div class="r " style="left:87.60px;top:542.80px;width:349.60px;height:5.60px;background:#cdcdcd;"></div>
<svg class="r" style="left:73.40px;top:543.80px;" width="2.2" height="3.6" viewBox="0 0 2.2 3.6"><path d="M1.9 0.3 L0.4 1.8 L1.9 3.3" fill="none" stroke="#555" stroke-width="0.6"/></svg>
<svg class="r" style="left:764.20px;top:543.80px;" width="2.2" height="3.6" viewBox="0 0 2.2 3.6"><path d="M0.3 0.3 L1.8 1.8 L0.3 3.3" fill="none" stroke="#555" stroke-width="0.6"/></svg>
<svg class="r" style="left:0;top:0" width="1024" height="560" viewBox="0 0 1024 560">
<defs>
<clipPath id="bclip"><polygon points="217,140 266.25,152.5 274.25,118 406,148 417,101.5 485.5,118 427.75,360 448.5,365 422.75,467 402.75,462.5 392.5,509.5 290,485 299.5,437.5 208,416.25 199.5,462.5 143.75,449.5"/></clipPath>
<filter id="hblur" x="-20%" y="-20%" width="140%" height="140%"><feGaussianBlur stdDeviation="5.2"/></filter>
<filter id="wblur" x="-5%" y="-5%" width="110%" height="110%"><feGaussianBlur stdDeviation="0.35"/></filter>
</defs>
<g clip-path="url(#bclip)">
<rect x="130" y="95" width="370" height="425" fill="#cbcb2e"/>
<g filter="url(#hblur)">
<polygon points="321,116 408,136 424,142 424,200 404,200 398,186 384,179 321,165" fill="#33c933" opacity="1.0"/>
<polygon points="323,182 392,190 390,215 370,219 345,224 322,224 319,214" fill="#33c933" opacity="1.0"/>
<polygon points="300,224 330,224 330,238 300,240" fill="#33c933" opacity="0.5"/>
<polygon points="246,234 322,238 320,246 296,250 300,290 286,340 258,340 262,290 248,262" fill="#33c933" opacity="0.7"/>
<polygon points="203,214 222,218 224,240 220,270 216,300 210,330 204,345 152,345 164,300 180,240 188,214" fill="#33c933" opacity="1.0"/>
<polygon points="240,262 266,266 262,300 258,340 226,340 232,300" fill="#33c933" opacity="1.0"/>
<polygon points="222,335 303,335 312,350 302,368 268,371 216,367" fill="#33c933" opacity="1.0"/>
<polygon points="262,288 296,292 308,318 306,340 258,340" fill="#33c933" opacity="0.85"/>
<polygon points="410,196 480,196 460,292 440,290 400,282 404,250" fill="#33c933" opacity="1.0"/>
<polygon points="400,196 412,196 404,282 392,282" fill="#33c933" opacity="0.5"/>
<polygon points="392,300 454,304 442,358 404,358 388,345 386,320" fill="#33c933" opacity="1.0"/>
<polygon points="418,367 450,368 462,372 450,416 428,420 414,410 408,385" fill="#33c933" opacity="1.0"/>
<polygon points="406,432 444,428 434,478 402,474" fill="#33c933" opacity="1.0"/>
<polygon points="280,450 318,460 326,476 340,484 366,484 374,470 384,452 398,440 414,464 404,522 276,498" fill="#33c933" opacity="0.92"/>
<polygon points="206,392 262,395 280,410 282,446 240,438 204,430" fill="#33c933" opacity="1.0"/>
<polygon points="148,358 200,362 196,392 142,388" fill="#33c933" opacity="1.0"/>
<polygon points="396,152 410,90 498,110 476,208 455,212 425,200 421,160" fill="#33cccc" opacity="1.0"/>
<polygon points="166,314 205,318 200,362 152,356" fill="#33cccc" opacity="1.0"/>
<polygon points="142,391 208,394 206,418 138,414" fill="#33cccc" opacity="1.0"/>
<ellipse cx="231" cy="347" rx="7" ry="11" fill="#33cccc" opacity="0.55" transform="rotate(13.2 231 347)"/>
<polygon points="447,212 474,212 462,264 444,258" fill="#33cccc" opacity="0.45"/>
<polygon points="429,94 498,110 486,162 462,156 452,144 440,146 429,138" fill="#4a63cf" opacity="1.0"/>
<polygon points="396,152 410,90 432,96 424,160" fill="#4a63cf" opacity="0.3"/>
<path d="M449 141 L474 127" stroke="#33cccc" stroke-width="5" stroke-linecap="round" fill="none" opacity="0.5"/>
<polygon points="136,416 216,421 210,476 128,458" fill="#4a63cf" opacity="1.0"/>
<path d="M146 400 L186 404" stroke="#4a63cf" stroke-width="4" stroke-linecap="round" fill="none" opacity="0.6"/>
<polygon points="262,153 321,167 340,170 340,181.5 321,180 262,170" fill="#cbcb2e" opacity="1.0"/>
<polygon points="336,169.5 350,172 384,179 393,183 384,184.5 350,182 336,181" fill="#cbcb2e" opacity="0.6"/>
<polygon points="400,186 404,187 403,205 400,225 396,255 392,290 378,290 384,250 393,215 397,200" fill="#cbcb2e" opacity="1.0"/>
<polygon points="385,282 441,288 438,300 385,300" fill="#cbcb2e" opacity="1.0"/>
<polygon points="226,215 248,225 236,289 227,324 218,360 212,389 200,389 205,355 215,324 219,289 223,240" fill="#cbcb2e" opacity="0.9"/>
<polygon points="198,376 260,378 307,371 307,391 260,391 198,388" fill="#cbcb2e" opacity="0.92"/>
<polygon points="400,356 430,359 440,364 438,372 410,372 400,366" fill="#cbcb2e" opacity="1.0"/>
</g>
</g>
<g clip-path="url(#bclip)"><g transform="rotate(13.2)" filter="url(#wblur)"><path d="M246.7 112.5H264.1M277.5 95.8V181.3M296.1 114.8V176.8M297.4 104.7H348.1M294.3 87.2H350.0M348.1 55.8V86.3M295.7 139.6H345.0M346.7 105.6V157.3M322.0 140.7V156.9M356.0 104.5H373.7M365.4 104.4V154.7M271.7 112.3V152.4M275.8 112.4V152.4M316.8 59.2V65.3M316.2 76.5V85.6M356.0 87.3H369.7M321.9 156.6H337.8M276.1 95.2H283.2M295.9 153.0V156.9M348.8 54.3V86.2M374.7 55.1V86.4M356.9 87.8H414.6M420.5 87.6H447.7M446.8 53.6V87.4M448.1 5.7V17.6M448.4 30.7V46.9M449.3 42.7H461.5M468.4 43.3H498.1M494.9 56.2H498.9M355.0 104.5H372.9M381.2 104.7H427.4M449.8 88.2H482.2M346.7 105.0V129.3M365.9 105.5V124.8M397.8 105.3V117.2M395.9 53.3V57.0M445.3 103.2H457.5M494.2 87.6H498.2M346.8 124.0V154.5M364.7 121.8V154.2M397.7 112.3V126.1M426.8 105.3V188.0M411.2 125.4V147.1M397.7 143.5V155.4M344.5 155.1H399.0M366.0 134.4H399.1M398.3 125.9H426.4M347.4 167.0H367.4M350.8 181.7H376.0M382.7 180.1H400.8M374.4 166.3V183.9M383.7 165.7V182.2M400.9 163.8V180.0M411.2 155.3H425.2M408.9 180.2H426.1M426.0 176.3V188.0M374.6 190.4V204.2M356.1 204.7H402.6M413.8 205.2H426.9M425.4 196.6V218.5M444.3 198.3V214.0M379.9 219.3V229.3M362.0 229.2H382.0M445.8 123.0V147.3M453.2 103.1V127.4M473.7 104.4V154.9M495.7 101.3V155.7M444.8 104.9H455.8M444.7 112.9H460.7M468.1 109.5H475.0M483.2 105.2H496.3M446.4 128.8H469.5M444.5 155.6H497.0M445.9 157.4H497.4M445.6 159.2V169.7M464.1 163.1V177.4M444.7 177.5H464.7M444.1 187.8H497.4M471.2 198.0V207.8M277.6 227.6V246.9M277.2 254.0V268.1M295.9 166.8H356.5M295.6 204.5H319.0M317.7 212.2V229.3M297.2 228.6H318.6M316.5 235.7V251.7M295.4 251.1H317.8M316.7 257.0V270.8M294.4 271.9H317.5M349.8 167.2V212.9M350.5 184.3H376.7M374.6 165.8V184.4M374.7 190.8V203.7M350.2 204.6H397.2M349.9 219.8V242.9M351.5 227.4H381.8M380.9 220.5V243.8M348.9 251.0V267.7M349.0 251.6H380.5M381.3 250.8V259.8M244.1 255.6H249.1M258.0 254.6H269.2M246.2 277.5H275.5M277.5 171.1V220.6M294.7 167.1V272.1M248.4 305.0H273.7M296.9 283.3H320.0M295.2 283.9V312.0M316.6 264.7V272.8M311.9 294.1V306.1M327.1 294.4V306.8M328.8 282.5H350.3M349.2 257.1V283.3M351.9 268.8H379.3M380.4 249.9V298.0M343.6 303.9V312.7M346.6 303.8V312.6M348.5 305.4H380.7M247.1 329.5H259.3M267.4 329.7H276.4M275.7 310.5V320.8M345.3 323.3V355.1M354.7 323.4H389.0M397.1 323.5H414.8M367.5 333.3V353.8M276.8 338.4V349.9M278.0 349.3H296.2M296.0 349.2V356.3M246.8 371.1H266.0M267.2 371.4V376.9M275.9 366.0H298.1M276.7 373.0V383.0M246.4 343.9H274.8M380.7 218.9V245.1M380.9 251.0V257.2M427.5 207.9V238.1M444.8 203.8V234.1M426.6 245.3V300.1M444.9 241.2V254.1M445.4 254.5H450.7M450.9 254.9V291.1M444.6 293.3H451.5M361.5 227.3H379.6M368.0 255.1H381.1M371.3 269.5H379.4M404.2 271.9H416.3M403.5 271.9V300.4M458.2 261.4H482.5M455.4 206.2H495.7M470.8 197.8V203.7M455.8 215.4V226.4M453.4 228.1H495.9M496.1 206.0V252.2M379.9 305.9H396.1M403.9 305.1H426.1M444.2 305.4H452.5M459.5 305.4H471.6M468.9 307.1V311.2M480.7 305.5H492.8M383.9 323.1H396.1M368.9 333.6V356.7M389.8 324.3H417.9M422.9 324.0H443.2M445.0 314.7V331.8M445.0 331.9H470.2M470.4 307.6V331.9M483.4 306.6H496.5M496.5 306.3H516.6M393.3 374.1H415.5M415.2 381.2V403.3M423.3 381.4H448.5M436.0 382.4V402.4M456.9 381.5V401.6M455.4 381.1H469.7M477.3 381.8V402.8M484.0 381.8H495.9M493.5 332.4H515.7M494.3 340.4V356.6M516.9 306.9V359.3M267.2 371.7V379.9M276.9 374.2V404.9M243.5 370.4H298.7M316.1 54.3V63.1M315.7 76.2V86.5M348.6 55.7V86.4M374.9 55.8V86.7M356.8 86.9H374.7M396.3 56.1V66.1" fill="none" stroke="#7c7c78" stroke-opacity="0.6" stroke-width="1.2"/></g></g>
<polygon points="217,140 266.25,152.5 274.25,118 406,148 417,101.5 485.5,118 427.75,360 448.5,365 422.75,467 402.75,462.5 392.5,509.5 290,485 299.5,437.5 208,416.25 199.5,462.5 143.75,449.5" fill="none" stroke="#8080b4" stroke-width="0.8" opacity="0.85"/>
<g fill="none" stroke="#7f7fd0" stroke-width="0.5" opacity="0.9"><path d="M217 140 L210.6 138.4 Q209.6 137 211 136.6 L216.4 138"/><path d="M143.8 449.5 L137.6 448 Q136.8 446.6 138 446.2 L143.2 447.4"/><path d="M199.5 462.5 L204.6 463.8 Q205.6 462.4 204.6 461.6 L199.8 460.4"/><path d="M290 485 L284.4 483.6 Q283.4 482.2 284.6 481.8 L289.6 483"/><path d="M392.5 509.5 L397.8 510.8 Q398.8 509.4 397.8 508.6 L393 507.4"/><path d="M422.6 467 L421.2 473 Q422.4 474 423.2 473 L424.4 467.6"/></g>
<g fill="none" stroke="#e06a6a" stroke-width="0.5" opacity="0.8"><path d="M217 140 L214 153"/><path d="M258 150.4 L266.2 152.5"/><path d="M170 340 L143.8 449.5"/><path d="M208 416.3 L199.5 462.5"/><path d="M299.5 437.5 L291 480"/><path d="M208 416.3 L299.5 437.5"/></g>
<g stroke="#f2f21c" stroke-width="0.9" fill="none" stroke-linejoin="round"><path d="M254.3 175 L211.3 348.8 L309 372.6"/><path d="M340.2 286.5 L318.4 367.4"/><path d="M322 380 L345 397"/></g>
<g transform="translate(256.3 167.5)"><circle r="8.7" fill="#fff"/><circle r="7.9" fill="#fff" stroke="#000" stroke-width="0.8"/><path d="M0 0 L-5.45 -5.45 A7.7 7.7 0 0 1 5.45 -5.45 Z M0 0 L5.45 5.45 A7.7 7.7 0 0 1 -5.45 5.45 Z" fill="#000"/></g>
<g transform="translate(341.6 278.6)"><circle r="8.7" fill="#fff"/><circle r="7.9" fill="#fff" stroke="#000" stroke-width="0.8"/><path d="M0 0 L-5.45 -5.45 A7.7 7.7 0 0 1 5.45 -5.45 Z M0 0 L5.45 5.45 A7.7 7.7 0 0 1 -5.45 5.45 Z" fill="#000"/></g>
<g transform="translate(350.4 402.4)"><circle r="8.7" fill="#fff"/><circle r="7.9" fill="#fff" stroke="#000" stroke-width="0.8"/><path d="M0 0 L-5.45 -5.45 A7.7 7.7 0 0 1 5.45 -5.45 Z M0 0 L5.45 5.45 A7.7 7.7 0 0 1 -5.45 5.45 Z" fill="#000"/></g>
<g transform="translate(316.6 375.2)"><rect x="-9.3" y="-9" width="18.6" height="18" fill="#e2e2e2"/><circle r="8.5" fill="#000"/><path d="M-7.6 0 H-1.6 M0 0 L3.6 -3.6 M0 0 L3.6 3.6" stroke="#fff" stroke-width="1.2" fill="none"/><path d="M0.2 0 L-3 -2.2 V2.2Z M6 -6 L1.8 -5 L5 -1.8Z M6 6 L1.8 5 L5 1.8Z" fill="#fff"/><circle r="0.8" fill="#e6e622"/></g>
<g fill="#1a1a1a"><circle cx="304.2" cy="436.4" r="1.3"/><circle cx="352.2" cy="447.8" r="1.3"/><circle cx="327.6" cy="364.6" r="0.8"/></g>
<text transform="translate(212.6 355.2) rotate(-76.8)" font-size="10" fill="#151515" stroke="#151515" stroke-width="0.3" textLength="31.2" lengthAdjust="spacingAndGlyphs">1.00 m</text>
<path d="M201.8 335.6 L207.6 337 L206.4 342.2 L200.6 340.8 M207.6 337 L206.4 342.2" stroke="#2448c8" stroke-width="0.7" fill="none"/>
</svg>
<div class="r " style="left:134.50px;top:99.10px;width:554.60px;height:416.40px;background:transparent;border:1.1px solid #b3b3b3;"></div>
<div class="r " style="left:577.30px;top:99.10px;width:1.10px;height:416.40px;background:#b3b3b3;"></div>
<div class="r " style="left:578.40px;top:100.20px;width:109.60px;height:13.60px;background:#b3c6e3;"></div>
<div class="r " style="left:578.40px;top:113.60px;width:109.60px;height:0.70px;background:#a9a9a9;"></div>
<span class="t " style="left:580.50px;top:100.09px;font-size:9.5px;line-height:11.40px;color:#1c1c1c;transform:scaleX(0.988);">Indoor prediction legend</span>
<span class="t " style="left:600.00px;top:118.11px;font-size:10px;line-height:12.00px;color:#111;font-weight:bold;transform:scaleX(0.983);">Uplink RSSI</span>
<span class="t " style="left:614.70px;top:129.90px;font-size:9.7px;line-height:11.64px;color:#222;transform:scaleX(0.995);">[dBm]</span>
<div class="r " style="left:583.20px;top:155.60px;width:13.80px;height:291.80px;background:#000;"></div>
<div class="r " style="left:584.60px;top:157.00px;width:11.00px;height:289.00px;background:linear-gradient(to bottom,#ff33ff 0%,#ff33c8 8%,#ff3340 16.4%,#ff7a33 25%,#ffc433 33.5%,#ffff33 42%,#a8ff33 50%,#33ff33 58.6%,#33ffa0 63%,#33ffff 67%,#44b0ff 71%,#5588ff 75.2%,#4a5cf0 83%,#3333cc 92%,#333366 96%,#333333 100%);"></div>
<span class="t " style="left:603.10px;top:151.09px;font-size:9.5px;line-height:11.40px;color:#3a3aff;transform:scaleX(0.987);">&gt;-40.00 (0.0%)</span>
<div class="r " style="left:594.60px;top:204.81px;width:4.60px;height:0.80px;background:#000;"></div>
<span class="t " style="left:603.10px;top:199.09px;font-size:9.5px;line-height:11.40px;color:#3a3aff;transform:scaleX(0.987);">&gt;-50.00 (0.0%)</span>
<div class="r " style="left:594.60px;top:229.02px;width:4.60px;height:0.80px;background:#000;"></div>
<span class="t " style="left:603.10px;top:224.09px;font-size:9.5px;line-height:11.40px;color:#3a3aff;transform:scaleX(0.987);">&gt;-55.00 (0.0%)</span>
<div class="r " style="left:594.60px;top:253.22px;width:4.60px;height:0.80px;background:#000;"></div>
<span class="t " style="left:603.10px;top:248.09px;font-size:9.5px;line-height:11.40px;color:#3a3aff;transform:scaleX(0.987);">&gt;-60.00 (0.0%)</span>
<div class="r " style="left:594.60px;top:277.42px;width:4.60px;height:0.80px;background:#000;"></div>
<span class="t " style="left:603.10px;top:272.09px;font-size:9.5px;line-height:11.40px;color:#3a3aff;transform:scaleX(0.987);">&gt;-65.00 (0.0%)</span>
<div class="r " style="left:594.60px;top:325.83px;width:4.60px;height:0.80px;background:#000;"></div>
<span class="t " style="left:603.10px;top:320.09px;font-size:9.5px;line-height:11.40px;color:#3a3aff;transform:scaleX(0.986);">&gt;-75.00 (79.6%)</span>
<div class="r " style="left:594.60px;top:350.04px;width:4.60px;height:0.80px;background:#000;"></div>
<span class="t " style="left:603.10px;top:345.09px;font-size:9.5px;line-height:11.40px;color:#3a3aff;transform:scaleX(0.986);">&gt;-80.00 (91.0%)</span>
<div class="r " style="left:594.60px;top:374.25px;width:4.60px;height:0.80px;background:#000;"></div>
<span class="t " style="left:603.10px;top:369.09px;font-size:9.5px;line-height:11.40px;color:#3a3aff;transform:scaleX(0.986);">&gt;-85.00 (98.5%)</span>
<div class="r " style="left:594.60px;top:422.65px;width:4.60px;height:0.80px;background:#000;"></div>
<span class="t " style="left:603.10px;top:417.09px;font-size:9.5px;line-height:11.40px;color:#3a3aff;transform:scaleX(0.987);">&gt;-95.00 (100.0%)</span>
<span class="t " style="left:603.10px;top:441.09px;font-size:9.5px;line-height:11.40px;color:#3a3aff;transform:scaleX(0.988);">&gt;-100.00 (100.0%)</span>
<span class="t " style="left:584.30px;top:455.09px;font-size:9.5px;line-height:11.40px;color:#222;transform:scaleX(0.975);">700 MHz - P25</span>
<div class="r " style="left:578.40px;top:477.80px;width:110.00px;height:0.80px;background:#b5b5b5;"></div>
<div class="r " style="left:578.40px;top:486.30px;width:110.00px;height:0.80px;background:#b5b5b5;"></div>
<div class="r " style="left:578.40px;top:500.40px;width:110.00px;height:0.80px;background:#b5b5b5;"></div>
<span class="t " style="left:619.60px;top:493.25px;font-size:5.1px;line-height:6.12px;color:#222;font-weight:bold;transform:scaleX(1.023);">2022-10-24</span>
<span class="t " style="left:619.20px;top:507.35px;font-size:5.0px;line-height:6.00px;color:#222;font-weight:bold;transform:scaleX(0.992);">Page 2 of 4</span>
<svg class="r" style="left:130.20px;top:94.80px;" width="10.4" height="10.4" viewBox="0 0 10.4 10.4"><circle cx="5.2" cy="5.2" r="4.6" fill="rgba(255,255,255,0.35)" stroke="#cc5a5a" stroke-width="0.7" stroke-dasharray="1.2 0.5"/><circle cx="5.2" cy="5.2" r="2.6" fill="none" stroke="#d47878" stroke-width="0.5" stroke-dasharray="0.9 0.6"/><path d="M0.4 5.2 H10 M5.2 0.4 V10" stroke="#c04a4a" stroke-width="0.6"/></svg>
<div class="r " style="left:777.10px;top:62.20px;width:216.80px;height:486.00px;background:#f0f0f0;border:0.6px solid #d0d0d0;"></div>
<div class="r " style="left:776.00px;top:73.40px;width:1.50px;height:475.00px;background:#e2e2e2;"></div>
<span class="t " style="left:782.00px;top:63.73px;font-size:4.6px;line-height:5.52px;color:#444;">Prediction</span>
<svg class="r" style="left:982.00px;top:64.60px;" width="2.4" height="3.4" viewBox="0 0 2.4 3.4"><path d="M0.5 0.3 H1.9 V2 H0.5Z M0 2 H2.4 M1.2 2 V3.4" stroke="#555" stroke-width="0.5" fill="#555"/></svg>
<svg class="r" style="left:987.00px;top:64.80px;" width="3.2" height="3.2" viewBox="0 0 3.2 3.2"><path d="M0.3 0.3 L2.9 2.9 M2.9 0.3 L0.3 2.9" stroke="#444" stroke-width="0.55"/></svg>
<div class="r " style="left:869.40px;top:70.20px;width:33.80px;height:10.00px;background:#d9d9d9;"></div>
<div class="r " style="left:815.60px;top:70.60px;width:0.40px;height:9.20px;background:#dcdcdc;"></div>
<div class="r " style="left:842.20px;top:70.60px;width:0.40px;height:9.20px;background:#dcdcdc;"></div>
<div class="r " style="left:869.20px;top:70.60px;width:0.40px;height:9.20px;background:#dcdcdc;"></div>
<svg class="r" style="left:780.40px;top:71.80px;" width="6.4" height="6.4" viewBox="0 0 6.4 6.4"><rect x="0.2" y="0.4" width="2.6" height="2.4" fill="#444"/><rect x="3.6" y="0.4" width="2.6" height="2.4" fill="#3f8ccb"/><rect x="0.2" y="3.6" width="2.6" height="2.4" fill="#3f8ccb"/><rect x="3.6" y="3.6" width="2.6" height="2.4" fill="#444"/></svg>
<span class="t " style="left:789.00px;top:72.82px;font-size:4.5px;line-height:5.40px;color:#2b2b2b;transform:scaleX(0.897);">Calculations</span>
<svg class="r" style="left:817.60px;top:72.00px;" width="6" height="6" viewBox="0 0 6 6"><path d="M3 0.4 L5.8 1.8 L3 3.2 L0.2 1.8Z" fill="#333"/><path d="M0.2 3 L3 4.4 L5.8 3 M0.2 4.2 L3 5.6 L5.8 4.2" fill="none" stroke="#333" stroke-width="0.7"/></svg>
<span class="t " style="left:825.50px;top:72.82px;font-size:4.5px;line-height:5.40px;color:#2b2b2b;transform:scaleX(0.925);">Layers</span>
<svg class="r" style="left:844.40px;top:72.00px;" width="6.4" height="6.2" viewBox="0 0 6.4 6.2"><path d="M1 6 L2.4 1.4 H6.2 M4.4 1.4 L3.6 6 M0.2 3.4 H2.6" fill="none" stroke="#222" stroke-width="0.9"/></svg>
<span class="t " style="left:852.50px;top:72.82px;font-size:4.5px;line-height:5.40px;color:#2b2b2b;transform:scaleX(0.928);">Survey</span>
<svg class="r" style="left:871.80px;top:72.00px;" width="6.4" height="6.2" viewBox="0 0 6.4 6.2"><path d="M0.4 6 L2 3.4 L3 4.4 L5 1.2" fill="none" stroke="#333" stroke-width="0.8"/><rect x="3.6" y="0.2" width="2.6" height="2.4" fill="none" stroke="#333" stroke-width="0.5"/><circle cx="1" cy="5.4" r="0.8" fill="#333"/></svg>
<span class="t " style="left:880.00px;top:72.82px;font-size:4.5px;line-height:5.40px;color:#2b2b2b;transform:scaleX(0.949);">Prediction</span>
<svg class="r" style="left:778.90px;top:83.90px;" width="6.8" height="6.8" viewBox="0 0 6.8 6.8"><circle cx="3.4" cy="3.4" r="3.3" fill="#3f8ccb"/><path d="M3.4 1.4 V5.4 M1.4 3.4 H5.4" stroke="#fff" stroke-width="0.9"/></svg>
<svg class="r" style="left:788.60px;top:83.90px;" width="6.8" height="6.8" viewBox="0 0 6.8 6.8"><circle cx="3.4" cy="3.4" r="3.3" fill="#3f8ccb"/><path d="M1.4 3.4 H5.4" stroke="#fff" stroke-width="0.9"/></svg>
<svg class="r" style="left:798.10px;top:83.90px;" width="6.8" height="6.8" viewBox="0 0 6.8 6.8"><circle cx="3.4" cy="3.4" r="3.3" fill="#3f8ccb"/><circle cx="3.4" cy="3.4" r="1.7" fill="none" stroke="#fff" stroke-width="0.7"/><path d="M3.4 2.4 V3.5" stroke="#fff" stroke-width="0.5"/></svg>
<svg class="r" style="left:808.40px;top:84.00px;" width="8" height="7" viewBox="0 0 8 7"><path d="M2.6 0.4 V2 M1.4 2 H3.8 V4 H1.4Z M0.4 4 H4.8 V6.6 H0.4Z M5.6 5 H7.6" fill="none" stroke="#a8a8a8" stroke-width="0.7"/></svg>
<div class="r " style="left:820.40px;top:83.00px;width:0.40px;height:8.60px;background:#d8d8d8;"></div>
<svg class="r" style="left:822.90px;top:83.90px;" width="6.8" height="6.8" viewBox="0 0 6.8 6.8"><circle cx="3.4" cy="3.4" r="3.3" fill="#3f8ccb"/><path d="M2.6 1.8 L5 3.4 L2.6 5Z" fill="#fff"/></svg>
<svg class="r" style="left:832.80px;top:86.80px;" width="2.2" height="1.4" viewBox="0 0 2.2 1.4"><path d="M0 0 H2.2 L1.1 1.3Z" fill="#444"/></svg>
<svg class="r" style="left:838.80px;top:85.00px;" width="6.4" height="4.8" viewBox="0 0 6.4 4.8"><path d="M0.2 0.6 H1 M0.2 2.4 H1 M0.2 4.2 H1" stroke="#333" stroke-width="0.8"/><path d="M1.8 0.6 H6.2 M1.8 2.4 H6.2 M1.8 4.2 H6.2" stroke="#333" stroke-width="0.8"/></svg>
<svg class="r" style="left:848.20px;top:84.00px;" width="6.8" height="6.8" viewBox="0 0 6.8 6.8"><path d="M1.4 1.6 A2.9 2.9 0 1 1 0.9 4.4" fill="none" stroke="#3f8ccb" stroke-width="0.7"/><path d="M0.2 0.6 L0.6 2.6 L2.6 2.2" fill="none" stroke="#3f8ccb" stroke-width="0.6"/><path d="M3.6 1.8 V3.6 L4.8 4.4" fill="none" stroke="#333" stroke-width="0.6"/></svg>
<div class="r " style="left:857.40px;top:83.00px;width:0.40px;height:8.60px;background:#d8d8d8;"></div>
<svg class="r" style="left:860.60px;top:84.20px;" width="6.8" height="6.4" viewBox="0 0 6.8 6.4"><path d="M0.2 3.2 H6.6" stroke="#333" stroke-width="0.9"/><path d="M3.4 0.2 L4.6 1.8 H2.2Z M3.4 6.2 L4.6 4.6 H2.2Z" fill="#3f8ccb"/></svg>
<svg class="r" style="left:870.80px;top:86.80px;" width="2.2" height="1.4" viewBox="0 0 2.2 1.4"><path d="M0 0 H2.2 L1.1 1.3Z" fill="#444"/></svg>
<div class="r " style="left:777.60px;top:93.20px;width:216.00px;height:0.50px;background:#dcdcdc;"></div>
<div class="r " style="left:777.60px;top:80.30px;width:216.00px;height:0.50px;background:#d6d6d6;"></div>
<div class="r " style="left:777.70px;top:102.40px;width:215.80px;height:445.40px;background:#ffffff;border-left:0.8px solid #c9c9c9;border-right:0.8px solid #c9c9c9;border-bottom:0.8px solid #c9c9c9;"></div>
<div class="r " style="left:777.70px;top:93.80px;width:215.80px;height:8.60px;background:#f1f1f1;border:0.5px solid #d2d2d2;"></div>
<div class="r " style="left:965.40px;top:94.00px;width:0.50px;height:8.20px;background:#d0d0d0;"></div>
<div class="r " style="left:965.40px;top:102.40px;width:0.40px;height:107.00px;background:#f0f0f0;"></div>
<div class="r " style="left:979.00px;top:94.00px;width:0.50px;height:8.20px;background:#d0d0d0;"></div>
<div class="r " style="left:979.00px;top:102.40px;width:0.40px;height:107.00px;background:#f0f0f0;"></div>
<svg class="r" style="left:969.20px;top:96.20px;" width="6" height="3.8" viewBox="0 0 6 3.8"><path d="M0.2 1.9 Q3 -0.9 5.8 1.9 Q3 4.7 0.2 1.9Z" fill="#222"/><circle cx="3" cy="1.9" r="0.8" fill="#f1f1f1"/></svg>
<svg class="r" style="left:983.20px;top:95.20px;" width="5.6" height="5.6" viewBox="0 0 5.6 5.6"><path d="M0.6 0.6 L5 5" stroke="#222" stroke-width="1.1"/><path d="M0.4 0.4 L2 0.8 L0.8 2Z" fill="#222"/></svg>
<div class="r " style="left:813.60px;top:163.45px;width:179.40px;height:7.40px;background:#dcdcdc;"></div>
<div class="r " style="left:778.40px;top:102.50px;width:214.60px;height:0.35px;background:#fafafa;"></div>
<div class="r " style="left:778.40px;top:110.10px;width:214.60px;height:0.35px;background:#fafafa;"></div>
<div class="r " style="left:778.40px;top:117.70px;width:214.60px;height:0.35px;background:#fafafa;"></div>
<div class="r " style="left:778.40px;top:125.30px;width:214.60px;height:0.35px;background:#fafafa;"></div>
<div class="r " style="left:778.40px;top:132.90px;width:214.60px;height:0.35px;background:#fafafa;"></div>
<div class="r " style="left:778.40px;top:140.50px;width:214.60px;height:0.35px;background:#fafafa;"></div>
<div class="r " style="left:778.40px;top:148.10px;width:214.60px;height:0.35px;background:#fafafa;"></div>
<div class="r " style="left:778.40px;top:155.70px;width:214.60px;height:0.35px;background:#fafafa;"></div>
<div class="r " style="left:778.40px;top:163.30px;width:214.60px;height:0.35px;background:#fafafa;"></div>
<div class="r " style="left:778.40px;top:170.90px;width:214.60px;height:0.35px;background:#fafafa;"></div>
<div class="r " style="left:778.40px;top:178.50px;width:214.60px;height:0.35px;background:#fafafa;"></div>
<div class="r " style="left:778.40px;top:186.10px;width:214.60px;height:0.35px;background:#fafafa;"></div>
<div class="r " style="left:778.40px;top:193.70px;width:214.60px;height:0.35px;background:#fafafa;"></div>
<div class="r " style="left:778.40px;top:201.30px;width:214.60px;height:0.35px;background:#fafafa;"></div>
<div class="r " style="left:778.40px;top:208.90px;width:214.60px;height:0.35px;background:#fafafa;"></div>
<svg class="r" style="left:780.20px;top:105.15px;" width="2.8" height="2.8" viewBox="0 0 2.8 2.8"><path d="M2.6 0.2 V2.6 H0.2Z" fill="#555"/></svg>
<span class="t " style="left:787.00px;top:103.82px;font-size:4.5px;line-height:5.40px;color:#333;transform:scaleX(0.965);">Antenna Contours</span>
<svg class="r" style="left:969.50px;top:103.65px;" width="5.4" height="5.4" viewBox="0 0 5.4 5.4"><rect x="0.3" y="0.3" width="4.8" height="4.8" fill="#fff" stroke="#b8b8b8" stroke-width="0.55"/></svg>
<svg class="r" style="left:787.60px;top:112.75px;" width="2.8" height="2.8" viewBox="0 0 2.8 2.8"><path d="M2.6 0.2 V2.6 H0.2Z" fill="#555"/></svg>
<span class="t " style="left:794.50px;top:111.82px;font-size:4.5px;line-height:5.40px;color:#333;transform:scaleX(0.988);">&lt;No operator defined&gt;</span>
<svg class="r" style="left:969.50px;top:111.25px;" width="5.4" height="5.4" viewBox="0 0 5.4 5.4"><rect x="0.3" y="0.3" width="4.8" height="4.8" fill="#fff" stroke="#b8b8b8" stroke-width="0.55"/></svg>
<svg class="r" style="left:795.20px;top:120.05px;" width="2.2" height="3" viewBox="0 0 2.2 3"><path d="M0.2 0.2 L2 1.5 L0.2 2.8Z" fill="#444"/></svg>
<span class="t " style="left:801.50px;top:118.82px;font-size:4.5px;line-height:5.40px;color:#333;transform:scaleX(0.900);">700 MHz - P25</span>
<svg class="r" style="left:969.50px;top:118.85px;" width="5.4" height="5.4" viewBox="0 0 5.4 5.4"><rect x="0.3" y="0.3" width="4.8" height="4.8" fill="#fff" stroke="#b8b8b8" stroke-width="0.55"/></svg>
<svg class="r" style="left:780.20px;top:127.95px;" width="2.8" height="2.8" viewBox="0 0 2.8 2.8"><path d="M2.6 0.2 V2.6 H0.2Z" fill="#555"/></svg>
<span class="t " style="left:787.00px;top:126.82px;font-size:4.5px;line-height:5.40px;color:#333;transform:scaleX(0.990);">Output Maps</span>
<svg class="r" style="left:983.30px;top:126.45px;" width="5.4" height="5.4" viewBox="0 0 5.4 5.4"><rect x="0.3" y="0.3" width="4.8" height="4.8" fill="#fff" stroke="#b8b8b8" stroke-width="0.55"/></svg>
<svg class="r" style="left:787.60px;top:135.55px;" width="2.8" height="2.8" viewBox="0 0 2.8 2.8"><path d="M2.6 0.2 V2.6 H0.2Z" fill="#555"/></svg>
<span class="t " style="left:794.50px;top:133.82px;font-size:4.5px;line-height:5.40px;color:#333;transform:scaleX(0.988);">&lt;No operator defined&gt;</span>
<svg class="r" style="left:983.30px;top:134.05px;" width="5.4" height="5.4" viewBox="0 0 5.4 5.4"><rect x="0.3" y="0.3" width="4.8" height="4.8" fill="#fff" stroke="#b8b8b8" stroke-width="0.55"/></svg>
<svg class="r" style="left:794.80px;top:143.15px;" width="2.8" height="2.8" viewBox="0 0 2.8 2.8"><path d="M2.6 0.2 V2.6 H0.2Z" fill="#555"/></svg>
<span class="t " style="left:801.50px;top:141.82px;font-size:4.5px;line-height:5.40px;color:#333;transform:scaleX(0.900);">700 MHz - P25</span>
<svg class="r" style="left:983.30px;top:141.65px;" width="5.4" height="5.4" viewBox="0 0 5.4 5.4"><rect x="0.3" y="0.3" width="4.8" height="4.8" fill="#fff" stroke="#b8b8b8" stroke-width="0.55"/></svg>
<svg class="r" style="left:802.00px;top:150.45px;" width="2.2" height="3" viewBox="0 0 2.2 3"><path d="M0.2 0.2 L2 1.5 L0.2 2.8Z" fill="#444"/></svg>
<svg class="r" style="left:806.60px;top:148.65px;" width="6.6" height="6.6" viewBox="0 0 6.6 6.6"><rect x="0" y="0" width="6.6" height="6.6" rx="0.6" fill="#2f8fe8"/><path d="M1.4 2.6 H5.2 M1.4 3.8 H5.2" stroke="#8cc4f6" stroke-width="0.6"/></svg>
<span class="t " style="left:815.40px;top:149.82px;font-size:4.5px;line-height:5.40px;color:#222;font-weight:bold;transform:scaleX(1.081);">Signal strength</span>
<svg class="r" style="left:969.50px;top:149.25px;" width="5.4" height="5.4" viewBox="0 0 5.4 5.4"><rect x="0.3" y="0.3" width="4.8" height="4.8" fill="#fff" stroke="#b8b8b8" stroke-width="0.55"/></svg>
<svg class="r" style="left:983.30px;top:149.25px;" width="5.4" height="5.4" viewBox="0 0 5.4 5.4"><rect x="0.3" y="0.3" width="4.8" height="4.8" fill="#fff" stroke="#b8b8b8" stroke-width="0.55"/></svg>
<svg class="r" style="left:802.00px;top:158.05px;" width="2.2" height="3" viewBox="0 0 2.2 3"><path d="M0.2 0.2 L2 1.5 L0.2 2.8Z" fill="#444"/></svg>
<svg class="r" style="left:806.60px;top:156.25px;" width="6.6" height="6.6" viewBox="0 0 6.6 6.6"><rect x="0" y="0" width="6.6" height="6.6" rx="0.6" fill="#2f8fe8"/><path d="M1.4 2.6 H5.2 M1.4 3.8 H5.2" stroke="#8cc4f6" stroke-width="0.6"/></svg>
<span class="t " style="left:815.40px;top:156.82px;font-size:4.5px;line-height:5.40px;color:#222;transform:scaleX(0.964);">Uplink Power at Antenna</span>
<svg class="r" style="left:969.50px;top:156.85px;" width="5.4" height="5.4" viewBox="0 0 5.4 5.4"><rect x="0.3" y="0.3" width="4.8" height="4.8" fill="#fff" stroke="#b8b8b8" stroke-width="0.55"/></svg>
<svg class="r" style="left:983.30px;top:156.85px;" width="5.4" height="5.4" viewBox="0 0 5.4 5.4"><rect x="0.3" y="0.3" width="4.8" height="4.8" fill="#fff" stroke="#b8b8b8" stroke-width="0.55"/></svg>
<svg class="r" style="left:802.00px;top:165.65px;" width="2.2" height="3" viewBox="0 0 2.2 3"><path d="M0.2 0.2 L2 1.5 L0.2 2.8Z" fill="#444"/></svg>
<svg class="r" style="left:806.60px;top:163.85px;" width="6.6" height="6.6" viewBox="0 0 6.6 6.6"><rect x="0" y="0" width="6.6" height="6.6" rx="0.6" fill="#2f8fe8"/><path d="M1.4 2.6 H5.2 M1.4 3.8 H5.2" stroke="#8cc4f6" stroke-width="0.6"/></svg>
<span class="t " style="left:815.40px;top:164.82px;font-size:4.5px;line-height:5.40px;color:#222;transform:scaleX(0.907);">Uplink RSSI</span>
<svg class="r" style="left:969.50px;top:164.45px;" width="5.4" height="5.4" viewBox="0 0 5.4 5.4"><rect x="0.3" y="0.3" width="4.8" height="4.8" fill="#fff" stroke="#b8b8b8" stroke-width="0.55"/><path d="M1.1 2.7 L2.2 3.9 L4.3 1.3" fill="none" stroke="#444" stroke-width="0.7"/></svg>
<svg class="r" style="left:983.30px;top:164.45px;" width="5.4" height="5.4" viewBox="0 0 5.4 5.4"><rect x="0.3" y="0.3" width="4.8" height="4.8" fill="#fff" stroke="#b8b8b8" stroke-width="0.55"/></svg>
<svg class="r" style="left:802.00px;top:173.25px;" width="2.2" height="3" viewBox="0 0 2.2 3"><path d="M0.2 0.2 L2 1.5 L0.2 2.8Z" fill="#444"/></svg>
<svg class="r" style="left:806.60px;top:171.45px;" width="6.6" height="6.6" viewBox="0 0 6.6 6.6"><rect x="0" y="0" width="6.6" height="6.6" rx="0.6" fill="#2f8fe8"/><path d="M1.4 2.6 H5.2 M1.4 3.8 H5.2" stroke="#8cc4f6" stroke-width="0.6"/></svg>
<span class="t " style="left:815.40px;top:171.82px;font-size:4.5px;line-height:5.40px;color:#222;transform:scaleX(0.929);">Uplink AGC</span>
<svg class="r" style="left:969.50px;top:172.05px;" width="5.4" height="5.4" viewBox="0 0 5.4 5.4"><rect x="0.3" y="0.3" width="4.8" height="4.8" fill="#fff" stroke="#b8b8b8" stroke-width="0.55"/></svg>
<svg class="r" style="left:983.30px;top:172.05px;" width="5.4" height="5.4" viewBox="0 0 5.4 5.4"><rect x="0.3" y="0.3" width="4.8" height="4.8" fill="#fff" stroke="#b8b8b8" stroke-width="0.55"/></svg>
<svg class="r" style="left:802.00px;top:180.85px;" width="2.2" height="3" viewBox="0 0 2.2 3"><path d="M0.2 0.2 L2 1.5 L0.2 2.8Z" fill="#444"/></svg>
<svg class="r" style="left:806.60px;top:179.05px;" width="6.6" height="6.6" viewBox="0 0 6.6 6.6"><rect x="0" y="0" width="6.6" height="6.6" rx="0.6" fill="#2f8fe8"/><path d="M1.4 2.6 H5.2 M1.4 3.8 H5.2" stroke="#8cc4f6" stroke-width="0.6"/></svg>
<span class="t " style="left:815.40px;top:179.82px;font-size:4.5px;line-height:5.40px;color:#222;transform:scaleX(0.991);">Near-Far Effect</span>
<svg class="r" style="left:969.50px;top:179.65px;" width="5.4" height="5.4" viewBox="0 0 5.4 5.4"><rect x="0.3" y="0.3" width="4.8" height="4.8" fill="#fff" stroke="#b8b8b8" stroke-width="0.55"/></svg>
<svg class="r" style="left:983.30px;top:179.65px;" width="5.4" height="5.4" viewBox="0 0 5.4 5.4"><rect x="0.3" y="0.3" width="4.8" height="4.8" fill="#fff" stroke="#b8b8b8" stroke-width="0.55"/></svg>
<svg class="r" style="left:780.20px;top:188.75px;" width="2.8" height="2.8" viewBox="0 0 2.8 2.8"><path d="M2.6 0.2 V2.6 H0.2Z" fill="#555"/></svg>
<span class="t " style="left:787.00px;top:187.82px;font-size:4.5px;line-height:5.40px;color:#333;transform:scaleX(0.963);">Others</span>
<span class="t " style="left:793.70px;top:194.82px;font-size:4.5px;line-height:5.40px;color:#333;transform:scaleX(0.985);">Survey Data Interpolation</span>
<svg class="r" style="left:969.50px;top:194.85px;" width="5.4" height="5.4" viewBox="0 0 5.4 5.4"><rect x="0.3" y="0.3" width="4.8" height="4.8" fill="#fff" stroke="#b8b8b8" stroke-width="0.55"/></svg>
<svg class="r" style="left:983.30px;top:194.85px;" width="5.4" height="5.4" viewBox="0 0 5.4 5.4"><rect x="0.3" y="0.3" width="4.8" height="4.8" fill="#fff" stroke="#b8b8b8" stroke-width="0.55"/></svg>
<span class="t " style="left:793.70px;top:202.82px;font-size:4.5px;line-height:5.40px;color:#333;transform:scaleX(0.978);">Donor Antenna Isolation</span>
<svg class="r" style="left:969.50px;top:202.45px;" width="5.4" height="5.4" viewBox="0 0 5.4 5.4"><rect x="0.3" y="0.3" width="4.8" height="4.8" fill="#fff" stroke="#b8b8b8" stroke-width="0.55"/></svg>
<div class="r " style="left:995.50px;top:62.60px;width:17.00px;height:485.60px;background:#f0f0f0;border:0.6px solid #d0d0d0;"></div>
<span class="t " style="left:999.00px;top:63.92px;font-size:4.4px;line-height:5.28px;color:#555;transform:scaleX(0.927);">...</span>
<svg class="r" style="left:1004.60px;top:64.80px;" width="3.2" height="3.2" viewBox="0 0 3.2 3.2"><path d="M0.3 0.3 L2.9 2.9 M2.9 0.3 L0.3 2.9" stroke="#444" stroke-width="0.55"/></svg>
<svg class="r" style="left:998.50px;top:71.50px;" width="6.4" height="6" viewBox="0 0 6.4 6"><path d="M0.4 0 V6" stroke="#8e8e8e" stroke-width="0.5"/><rect x="1.2" y="1" width="4.6" height="1.2" fill="#8e8e8e"/><rect x="1.2" y="3.6" width="3" height="1.2" fill="#8e8e8e"/></svg>
<svg class="r" style="left:998.50px;top:81.50px;" width="6.4" height="6" viewBox="0 0 6.4 6"><path d="M3.2 0 V6" stroke="#8e8e8e" stroke-width="0.5"/><rect x="0.6" y="1" width="5.2" height="1.2" fill="#8e8e8e"/><rect x="1.6" y="3.6" width="3.2" height="1.2" fill="#8e8e8e"/></svg>
<svg class="r" style="left:998.50px;top:91.50px;" width="6.4" height="6" viewBox="0 0 6.4 6"><path d="M6 0 V6" stroke="#8e8e8e" stroke-width="0.5"/><rect x="0.6" y="1" width="4.6" height="1.2" fill="#8e8e8e"/><rect x="2.2" y="3.6" width="3" height="1.2" fill="#8e8e8e"/></svg>
<svg class="r" style="left:998.50px;top:101.50px;" width="6.4" height="6" viewBox="0 0 6.4 6"><path d="M0 0.4 H6.4" stroke="#8e8e8e" stroke-width="0.5"/><rect x="1" y="1.2" width="1.2" height="4.6" fill="#8e8e8e"/><rect x="3.6" y="1.2" width="1.2" height="3" fill="#8e8e8e"/></svg>
<svg class="r" style="left:998.50px;top:111.50px;" width="6.4" height="6" viewBox="0 0 6.4 6"><path d="M0 3 H6.4" stroke="#8e8e8e" stroke-width="0.5"/><rect x="1" y="0.4" width="1.2" height="5.2" fill="#8e8e8e"/><rect x="3.6" y="1.4" width="1.2" height="3.2" fill="#8e8e8e"/></svg>
<svg class="r" style="left:998.50px;top:121.50px;" width="6.4" height="6" viewBox="0 0 6.4 6"><path d="M0 5.8 H6.4" stroke="#8e8e8e" stroke-width="0.5"/><rect x="1" y="0.6" width="1.2" height="4.6" fill="#8e8e8e"/><rect x="3.6" y="2.2" width="1.2" height="3" fill="#8e8e8e"/></svg>
<svg class="r" style="left:998.50px;top:131.50px;" width="6.4" height="6" viewBox="0 0 6.4 6"><rect x="0.2" y="0.2" width="4" height="3.6" fill="#a8a8a8"/><rect x="2.2" y="2.2" width="4" height="3.6" fill="#8a8a8a" stroke="#f0f0f0" stroke-width="0.3"/></svg>
<svg class="r" style="left:998.50px;top:141.50px;" width="6.4" height="6" viewBox="0 0 6.4 6"><rect x="0.2" y="0.2" width="4" height="3.6" fill="#a8a8a8"/><rect x="2.2" y="2.2" width="4" height="3.6" fill="#8a8a8a" stroke="#f0f0f0" stroke-width="0.3"/></svg>
<svg class="r" style="left:998.50px;top:151.50px;" width="6.4" height="6" viewBox="0 0 6.4 6"><rect x="0.2" y="0.2" width="4" height="3.6" fill="#a8a8a8"/><rect x="2.2" y="2.2" width="4" height="3.6" fill="#8a8a8a" stroke="#f0f0f0" stroke-width="0.3"/></svg>
<svg class="r" style="left:998.50px;top:161.50px;" width="6.4" height="6" viewBox="0 0 6.4 6"><rect x="0.2" y="0.2" width="4" height="3.6" fill="#a8a8a8"/><rect x="2.2" y="2.2" width="4" height="3.6" fill="#8a8a8a" stroke="#f0f0f0" stroke-width="0.3"/></svg>
<svg class="r" style="left:998.50px;top:171.30px;" width="6.4" height="6.4" viewBox="0 0 6.4 6.4"><rect x="0.6" y="0.6" width="5.2" height="5.2" fill="none" stroke="#b0b0b0" stroke-width="0.6" stroke-dasharray="1 0.6"/></svg>
<svg class="r" style="left:998.50px;top:181.30px;" width="6.4" height="6.4" viewBox="0 0 6.4 6.4"><rect x="0.6" y="0.6" width="5.2" height="5.2" fill="none" stroke="#b0b0b0" stroke-width="0.6" stroke-dasharray="1 0.6"/></svg>
<svg class="r" style="left:998.50px;top:191.30px;" width="6.4" height="6.4" viewBox="0 0 6.4 6.4"><path d="M0.6 0.4 V5.8 H6" fill="none" stroke="#3a3a3a" stroke-width="0.8"/><rect x="2" y="3" width="2.4" height="1.8" fill="none" stroke="#3f8ccb" stroke-width="0.5"/></svg>
<svg class="r" style="left:998.50px;top:201.30px;" width="6.4" height="6.4" viewBox="0 0 6.4 6.4"><path d="M2 0.2 V6.2 M4.4 0.2 V6.2 M0.2 2 H6.2 M0.2 4.4 H6.2" fill="none" stroke="#3a3a3a" stroke-width="0.8"/><path d="M4.4 0.6 L6 2" stroke="#3f8ccb" stroke-width="0.7"/></svg>
<svg class="r" style="left:998.50px;top:211.30px;" width="6.4" height="6.4" viewBox="0 0 6.4 6.4"><path d="M0.2 3.2 H6.2" stroke="#3a3a3a" stroke-width="0.7"/><path d="M3.2 0.4 L4.6 2 H1.8Z M3.2 6 L4.6 4.4 H1.8Z" fill="#3f8ccb"/></svg>
<svg class="r" style="left:998.50px;top:221.30px;" width="6.4" height="6.4" viewBox="0 0 6.4 6.4"><path d="M0.6 0.6 H3 M0.6 0.6 V3 M5.8 5.8 H3.4 M5.8 5.8 V3.4" fill="none" stroke="#3f8ccb" stroke-width="0.7"/><rect x="2" y="2" width="2.6" height="2.6" fill="none" stroke="#3a3a3a" stroke-width="0.6"/></svg>
<svg class="r" style="left:998.50px;top:231.30px;" width="6.4" height="6.4" viewBox="0 0 6.4 6.4"><path d="M0.4 1 H6 M1.6 2.2 V4 Q3.2 6.4 4.8 4 V2.2" fill="none" stroke="#8a8a8a" stroke-width="0.6"/></svg>
<svg class="r" style="left:998.50px;top:241.30px;" width="6.4" height="6.4" viewBox="0 0 6.4 6.4"><path d="M3.2 6.2 V3.4 L1 1 M3.2 3.4 L5.4 1" fill="none" stroke="#3a3a3a" stroke-width="0.9"/><circle cx="5.4" cy="1" r="0.8" fill="#3f8ccb"/></svg>
<svg class="r" style="left:998.50px;top:251.30px;" width="6.4" height="6.4" viewBox="0 0 6.4 6.4"><path d="M0.2 3.2 H6.2 M3.2 0.4 V6" stroke="#3f8ccb" stroke-width="0.6"/><circle cx="3.2" cy="3.2" r="1.2" fill="#f0f0f0" stroke="#3a3a3a" stroke-width="0.6"/></svg>
<svg class="r" style="left:998.50px;top:261.30px;" width="6.4" height="6.4" viewBox="0 0 6.4 6.4"><rect x="0.4" y="0.4" width="5.6" height="5.6" fill="none" stroke="#3a3a3a" stroke-width="0.8"/><path d="M3.2 1.8 V4.6 M1.8 3.2 H4.6" stroke="#3f8ccb" stroke-width="0.8"/></svg>
<svg class="r" style="left:998.50px;top:271.30px;" width="6.4" height="6.4" viewBox="0 0 6.4 6.4"><rect x="0.4" y="0.4" width="5.6" height="5.6" fill="none" stroke="#3a3a3a" stroke-width="0.8"/><path d="M2.2 2.2 L4.2 4.2 M4.2 2.2 L2.2 4.2" stroke="#3f8ccb" stroke-width="0.8"/></svg>
<svg class="r" style="left:998.50px;top:281.80px;" width="6.4" height="5.4" viewBox="0 0 6.4 5.4"><rect x="0.3" y="0.3" width="2.2" height="4.8" fill="none" stroke="#a8a8a8" stroke-width="0.5"/><rect x="3.9" y="0.3" width="2.2" height="4.8" fill="none" stroke="#a8a8a8" stroke-width="0.5"/></svg>
<svg class="r" style="left:998.80px;top:291.40px;" width="6" height="6.2" viewBox="0 0 6 6.2"><rect x="0.3" y="0.3" width="5.2" height="2.2" fill="none" stroke="#a8a8a8" stroke-width="0.5"/><rect x="0.3" y="3.7" width="5.2" height="2.2" fill="none" stroke="#a8a8a8" stroke-width="0.5"/></svg>
<svg class="r" style="left:998.70px;top:301.50px;" width="6" height="6" viewBox="0 0 6 6"><g transform="translate(6,0) scale(-1,1)"><path d="M3 1.4 A2.3 2.3 0 1 1 0.9 2.9" fill="none" stroke="#a8a8a8" stroke-width="0.55"/><path d="M2 0.2 L3.4 1.4 L2 2.6" fill="none" stroke="#a8a8a8" stroke-width="0.55"/></g></svg>
<svg class="r" style="left:998.70px;top:311.50px;" width="6" height="6" viewBox="0 0 6 6"><g><path d="M3 1.4 A2.3 2.3 0 1 1 0.9 2.9" fill="none" stroke="#a8a8a8" stroke-width="0.55"/><path d="M2 0.2 L3.4 1.4 L2 2.6" fill="none" stroke="#a8a8a8" stroke-width="0.55"/></g></svg>
<svg class="r" style="left:998.70px;top:321.30px;" width="6" height="6.4" viewBox="0 0 6 6.4"><circle cx="3" cy="1.2" r="1.1" fill="#3a3a3a"/><path d="M2.4 2 H3.6 L3.9 4 H5.4 V5 H0.6 V4 H2.1Z" fill="#3a3a3a"/><rect x="0.8" y="5.6" width="4.4" height="0.8" fill="#3f8ccb"/></svg>
<svg class="r" style="left:1016.00px;top:66.20px;" width="7" height="7" viewBox="0 0 7 7"><path d="M3.5 0.4 V6.6 M0.6 1.8 L6.4 5.2 M6.4 1.8 L0.6 5.2" stroke="#222" stroke-width="0.8"/><circle cx="3.5" cy="3.5" r="1" fill="#222"/></svg>
<span class="t" style="left:1022.60px;top:74.60px;font-size:4.5px;line-height:5.4px;color:#3a4a66;transform-origin:left top;transform:rotate(90deg) scaleX(0.893);">Systems</span>
<svg class="r" style="left:1016.00px;top:96.40px;" width="7" height="7" viewBox="0 0 7 7"><circle cx="3.5" cy="3.5" r="2.4" fill="#f0f0f0" stroke="#222" stroke-width="0.8"/><path d="M3.5 0 V1 M3.5 6 V7 M0 3.5 H1 M6 3.5 H7" stroke="#222" stroke-width="0.9"/><rect x="2.4" y="3" width="2.2" height="1" fill="#3f8ccb"/></svg>
<span class="t" style="left:1022.60px;top:104.60px;font-size:4.5px;line-height:5.4px;color:#3a4a66;transform-origin:left top;transform:rotate(90deg) scaleX(0.999);">Part Info</span>
<svg class="r" style="left:1016.00px;top:126.60px;" width="7" height="7" viewBox="0 0 7 7"><rect x="0.5" y="0.5" width="6" height="6" fill="none" stroke="#222" stroke-width="0.9"/><path d="M2.4 0.5 V3.4 H4.6 M4.6 6.5 V3.4" fill="none" stroke="#222" stroke-width="0.7"/></svg>
<span class="t" style="left:1022.60px;top:135.40px;font-size:4.5px;line-height:5.4px;color:#3a4a66;transform-origin:left top;transform:rotate(90deg) scaleX(0.924);">Plans</span>
<svg class="r" style="left:1016.00px;top:152.60px;" width="7" height="7" viewBox="0 0 7 7"><circle cx="3.5" cy="3.5" r="3" fill="#f0f0f0" stroke="#3f8ccb" stroke-width="0.9"/><circle cx="3.5" cy="3.5" r="1" fill="#3f8ccb"/></svg>
<span class="t" style="left:1022.60px;top:161.60px;font-size:4.5px;line-height:5.4px;color:#3a4a66;transform-origin:left top;transform:rotate(90deg) scaleX(1.004);">Properties</span>
</div>
</body></html>
